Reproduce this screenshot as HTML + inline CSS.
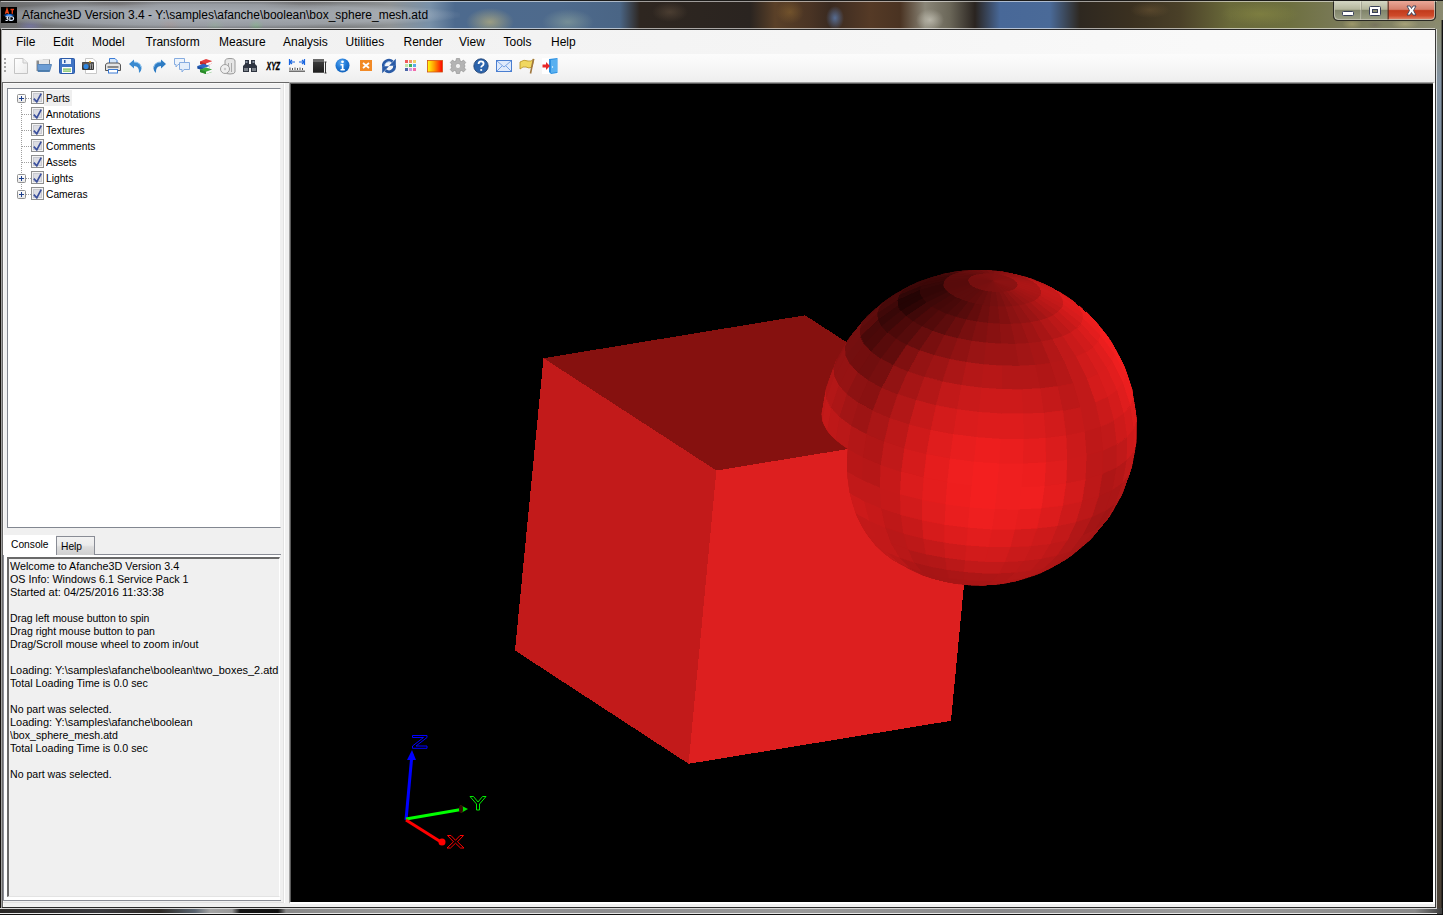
<!DOCTYPE html><html><head><meta charset="utf-8"><style>

*{margin:0;padding:0;box-sizing:border-box}
html,body{width:1443px;height:915px;overflow:hidden;background:#1a1510;font-family:"Liberation Sans", sans-serif;}
.a{position:absolute}
.t{position:absolute;white-space:pre;color:#000;line-height:13px}

</style></head><body>
<div class="a" style="left:0;top:0;width:1443px;height:915px;background:radial-gradient(ellipse 14px 6px at 30px 26px,rgba(120,120,190,.55),rgba(0,0,0,0)),radial-gradient(ellipse 12px 6px at 170px 24px,rgba(150,110,100,.45),rgba(0,0,0,0)),radial-gradient(ellipse 10px 6px at 215px 25px,rgba(110,150,110,.5),rgba(0,0,0,0)),radial-gradient(ellipse 8px 6px at 256px 25px,rgba(90,170,90,.55),rgba(0,0,0,0)),radial-gradient(ellipse 40px 5px at 120px 5px,rgba(70,60,55,.5),rgba(0,0,0,0)),radial-gradient(ellipse 40px 5px at 300px 5px,rgba(70,65,60,.45),rgba(0,0,0,0)),radial-gradient(ellipse 24px 14px at 490px 22px,rgba(205,190,125,.6),rgba(0,0,0,0)),radial-gradient(ellipse 26px 13px at 568px 22px,rgba(150,172,160,.55),rgba(0,0,0,0)),radial-gradient(ellipse 18px 10px at 670px 12px,rgba(110,90,70,.45),rgba(0,0,0,0)),radial-gradient(ellipse 14px 12px at 790px 12px,rgba(150,110,50,.45),rgba(0,0,0,0)),radial-gradient(ellipse 9px 12px at 835px 18px,rgba(95,130,185,.75),rgba(0,0,0,0)),radial-gradient(ellipse 14px 11px at 930px 20px,rgba(210,208,196,.65),rgba(0,0,0,0)),radial-gradient(ellipse 20px 8px at 1150px 10px,rgba(130,100,60,.35),rgba(0,0,0,0)),radial-gradient(ellipse 40px 12px at 1260px 14px,rgba(150,150,70,.4),rgba(0,0,0,0)),radial-gradient(ellipse 10px 5px at 1352px 24px,rgba(185,175,120,.55),rgba(0,0,0,0)),radial-gradient(ellipse 14px 5px at 1405px 24px,rgba(195,185,135,.55),rgba(0,0,0,0)),radial-gradient(ellipse 8px 4px at 1375px 25px,rgba(110,100,90,.5),rgba(0,0,0,0)),linear-gradient(90deg,#6a6a6a 0px,#77797c 60px,#7a7c80 150px,#74767a 250px,#7a7c7e 330px,#8e9294 390px,#7890a8 430px,#4d6a8e 455px,#4e6a8c 560px,#4a6585 620px,#2e2620 640px,#2c2520 700px,#2a2420 750px,#5a4028 775px,#4a3424 810px,#3a2a20 830px,#553a26 870px,#4a3322 900px,#8a8678 925px,#6a6658 950px,#2a2420 975px,#486898 1000px,#4a6a98 1050px,#2e2820 1080px,#3a3020 1130px,#4a4028 1180px,#6a6a3a 1230px,#6e7040 1290px,#7a7a58 1340px,#8a8a70 1443px)"></div>
<div class="a" style="left:0;top:0;width:1443px;height:1px;background:#1c1b19"></div>
<div class="a" style="left:1px;top:1px;width:1436px;height:1px;background:rgba(255,255,255,.55)"></div>
<div class="a" style="left:1px;top:28px;width:1436px;height:1px;background:rgba(255,255,255,.6)"></div>
<div class="a" style="left:0;top:2px;width:460px;height:26px;background:radial-gradient(ellipse 250px 14px at 215px 13px,rgba(200,208,218,.65),rgba(200,208,218,.4) 75%,rgba(200,208,218,0))"></div>
<svg class="a" style="left:1px;top:7px" width="16" height="16">
<defs><radialGradient id="icg" cx="0.5" cy="0.5" r="0.5"><stop offset="0" stop-color="#6ab8ff"/><stop offset="0.4" stop-color="#1a6ad8"/><stop offset="1" stop-color="#000" stop-opacity="0"/></radialGradient></defs>
<rect x="0" y="0" width="16" height="16" fill="#000"/>
<ellipse cx="8" cy="8.3" rx="7" ry="2.2" fill="url(#icg)"/>
<path d="M4.5 6.8 L6 2 L7.5 6.8 M5 5.3 H7" fill="none" stroke="#f04a1e" stroke-width="1.3"/>
<path d="M9.5 2.5 H13 M11.3 2.5 V6.8" fill="none" stroke="#e8401a" stroke-width="1.4"/>
<path d="M4.5 9.8 H7 L6 11.2 Q7.4 11.6 7 12.8 Q6.5 13.8 4.5 13.3" fill="none" stroke="#e8f0ff" stroke-width="1.1"/>
<path d="M8.8 9.8 H10.5 Q12.6 9.8 12.6 11.6 Q12.6 13.4 10.5 13.4 H8.8 Z" fill="none" stroke="#d8e8ff" stroke-width="1.1"/>
</svg>
<div class="t" style="left:22px;top:8px;font-size:12px;line-height:14px;color:#000">Afanche3D Version 3.4 - Y:\samples\afanche\boolean\box_sphere_mesh.atd</div>
<svg class="a" style="left:1330px;top:1px" width="113" height="24">
<defs>
<linearGradient id="bOl" x1="0" y1="0" x2="0" y2="1"><stop offset="0" stop-color="#d4d6c4"/><stop offset=".45" stop-color="#b4b69c"/><stop offset=".5" stop-color="#80846a"/><stop offset="1" stop-color="#9a9e84"/></linearGradient>
<linearGradient id="bRd" x1="0" y1="0" x2="0" y2="1"><stop offset="0" stop-color="#eaa898"/><stop offset=".45" stop-color="#d6806c"/><stop offset=".52" stop-color="#c23a1c"/><stop offset=".8" stop-color="#cf4a2a"/><stop offset="1" stop-color="#e08a70"/></linearGradient>
</defs>
<path d="M3.5 0.5 V15 Q3.5 19.5 8 19.5 H101 Q105.5 19.5 105.5 15 V0.5" fill="#3a3a30" stroke="#2a2a24"/>
<path d="M4.5 0 V15 Q4.5 18.5 8 18.5 H31 V0 Z" fill="url(#bOl)"/>
<path d="M31.5 0 H58 V18.5 H31.5 Z" fill="url(#bOl)"/>
<path d="M58.5 0 H104.5 V15 Q104.5 18.5 101 18.5 H58.5 Z" fill="url(#bRd)"/>
<path d="M4.5 0 V15 Q4.5 18.5 8 18.5 H101 Q104.5 18.5 104.5 15 V0" fill="none" stroke="rgba(255,255,240,.55)" stroke-width="1"/>
<line x1="31" y1="0" x2="31" y2="18.5" stroke="rgba(255,255,240,.6)"/>
<line x1="58" y1="0" x2="58" y2="18.5" stroke="rgba(90,20,10,.7)"/>
<rect x="12.5" y="10.5" width="11" height="4" rx="1" fill="#fff" stroke="#384058"/>
<rect x="39.5" y="5.5" width="11" height="9" rx="1" fill="#fff" stroke="#384058"/>
<rect x="42.5" y="8.5" width="5" height="3" fill="#8a8c70" stroke="#384058"/>
<path d="M77 5 H80 L81.5 7.5 L83 5 H86 L83.5 9.5 L86 14 H83 L81.5 11.5 L80 14 H77 L79.5 9.5 Z" fill="#fff" stroke="#384058" stroke-width="0.9" stroke-linejoin="round"/>
</svg>
<div class="a" style="left:1px;top:29px;width:1434px;height:879px;background:#f0f0f0;border-top:1px solid #2a2a2a"></div>
<div class="a" style="left:2px;top:30px;width:1433px;height:24px;background:linear-gradient(90deg,#efefef 0,#f2f2f2 400px,#f5f5f5 800px,#f9f9f9 1200px,#fafafa 1433px)"></div>
<div class="t" style="left:16px;top:35px;font-size:12px;line-height:14px">File</div>
<div class="t" style="left:53px;top:35px;font-size:12px;line-height:14px">Edit</div>
<div class="t" style="left:92px;top:35px;font-size:12px;line-height:14px">Model</div>
<div class="t" style="left:145.5px;top:35px;font-size:12px;line-height:14px">Transform</div>
<div class="t" style="left:219px;top:35px;font-size:12px;line-height:14px">Measure</div>
<div class="t" style="left:283px;top:35px;font-size:12px;line-height:14px">Analysis</div>
<div class="t" style="left:345.5px;top:35px;font-size:12px;line-height:14px">Utilities</div>
<div class="t" style="left:403.5px;top:35px;font-size:12px;line-height:14px">Render</div>
<div class="t" style="left:459px;top:35px;font-size:12px;line-height:14px">View</div>
<div class="t" style="left:503.5px;top:35px;font-size:12px;line-height:14px">Tools</div>
<div class="t" style="left:551px;top:35px;font-size:12px;line-height:14px">Help</div>
<div class="a" style="left:2px;top:54px;width:1433px;height:28px;background:linear-gradient(#fcfcfc,#f6f6f6 50%,#eeeeee)"></div>
<svg class="a" style="left:0;top:54px" width="600" height="28"><defs>
<linearGradient id="gW" x1="0" y1="0" x2="1" y2="1"><stop offset="0" stop-color="#fff"/><stop offset="1" stop-color="#ececec"/></linearGradient>
<linearGradient id="gBk" x1="0" y1="0" x2="0" y2="1"><stop offset="0" stop-color="#3c3c3c"/><stop offset="1" stop-color="#1e1e1e"/></linearGradient>
<radialGradient id="gInfo" cx="0.4" cy="0.3" r="0.8"><stop offset="0" stop-color="#5aa8f0"/><stop offset="0.5" stop-color="#1f78d6"/><stop offset="1" stop-color="#0e5cb4"/></radialGradient>
<linearGradient id="gYR" x1="0" y1="0" x2="1" y2="0"><stop offset="0" stop-color="#ffff10"/><stop offset="0.45" stop-color="#ff9a00"/><stop offset="1" stop-color="#ff0000"/></linearGradient>
</defs><rect x="4" y="4" width="2" height="2" fill="#a4a4a4" shape-rendering="crispEdges"/><rect x="4" y="8" width="2" height="2" fill="#a4a4a4" shape-rendering="crispEdges"/><rect x="4" y="12" width="2" height="2" fill="#a4a4a4" shape-rendering="crispEdges"/><rect x="4" y="16" width="2" height="2" fill="#a4a4a4" shape-rendering="crispEdges"/><g transform="translate(13,4)"><path d="M1.5 0.5 H10 L14.5 5 V15.5 H1.5 Z" fill="url(#gW)" stroke="#c4c4c4"/><path d="M10 0.5 V5 H14.5" fill="#eee" stroke="#c8c8c8"/></g><g transform="translate(36,4)"><path d="M0.5 2.5 H6 L7 1.5 H14 V13 H0.5 Z" fill="#8a8a8a"/><rect x="3" y="1.5" width="10" height="6" fill="#e8e8e8"/><path d="M1.5 6.5 H15.5 L13.5 13.5 H2 Z" fill="#6c9dd4" stroke="#5a86b8"/><path d="M2 12.8 H13.5" stroke="#3e6e9a"/></g><g transform="translate(59,4)"><rect x="0.5" y="0.5" width="15" height="15" rx="1" fill="#3f74c4" stroke="#2c5aa8"/><rect x="3" y="1" width="9" height="5" fill="#e8f0fb"/><rect x="5" y="2" width="1.5" height="3" fill="#2c5aa8"/><rect x="3" y="9" width="10" height="6" fill="#fff"/><rect x="4" y="10.5" width="8" height="1.2" fill="#6cb84a"/><rect x="4" y="12.5" width="8" height="1.2" fill="#6cb84a"/></g><g transform="translate(82,4)"><path d="M3.5 0.5 H11 L14.5 4 V15.5 H3.5 Z" fill="#fff" stroke="#c8c8c8"/><rect x="0" y="4" width="12" height="8" rx="1" fill="#3a3a3a"/><rect x="0.5" y="4.5" width="11" height="3" fill="#5a5a5a"/><circle cx="4" cy="8.5" r="2.6" fill="#2f86e0"/><rect x="7" y="3" width="2" height="1.5" fill="#e8b030"/><rect x="8" y="6" width="1" height="5" fill="#999"/><rect x="10" y="6" width="1" height="5" fill="#999"/></g><g transform="translate(105,4)"><path d="M4.5 0.5 H10 L12 2.5 V7 H4.5 Z" fill="#d4e6fa" stroke="#3a7bd5"/><path d="M0.5 7 Q1 5 3 5 H13 Q15 5 15.5 7 V12.5 H0.5 Z" fill="#e4e4e4" stroke="#555"/><rect x="2.5" y="8" width="11" height="2" fill="#888"/><rect x="3.5" y="11.5" width="9" height="3.5" fill="#fff" stroke="#3a7bd5"/></g><g transform="translate(128,4)"><path d="M1 6 L6 1.5 V4 Q13.5 4 13.5 10.5 Q13.5 13 11 15 Q11.5 8 6 8 V10.5 Z" fill="#3a8ad0"/><path d="M6 4 Q12 4 13 9" fill="none" stroke="#8cc4f0" stroke-width="1"/></g><g transform="translate(151,4)"><path d="M15 6 L10 1.5 V4 Q2.5 4 2.5 10.5 Q2.5 13 5 15 Q4.5 8 10 8 V10.5 Z" fill="#2e7cc4"/><path d="M10 4 Q4 4 3 9" fill="none" stroke="#80b8e8" stroke-width="1"/></g><g transform="translate(174,4)"><path d="M0.5 0.5 H10.5 V6.5 H4 L2 9 V6.5 H0.5 Z" fill="#eef4fb" stroke="#86ace0"/><path d="M5.5 4.5 H15.5 V11.5 H10 L8 14 V11.5 H5.5 Z" fill="#e4eefa" stroke="#86ace0"/></g><g transform="translate(197,4)"><path d="M3 3.5 L9 1 L15 3 L15 5.5 L9 8 L3 6 Z" fill="#e23c3c"/><path d="M9 5.5 L15 3.3 V5.5 L9 7.7 Z" fill="#fafafa"/><path d="M3 3.5 L9 5.5 V8 L3 6 Z" fill="#c02828"/>
<path d="M0.5 8 L6.5 5.8 L12.5 7.8 V10.3 L6.5 12.5 L0.5 10.5 Z" fill="#2c68c4"/><path d="M6.5 10.2 L12.5 8 V10.2 L6.5 12.4 Z" fill="#fafafa"/><path d="M0.5 8 L6.5 10.2 V12.5 L0.5 10.5 Z" fill="#1c4ea0"/>
<path d="M3 11.5 L9 9.5 L15 11.5 V14 L9 16 L3 14 Z" fill="#3aa83a"/><path d="M9 13.7 L15 11.6 V13.8 L9 15.9 Z" fill="#fafafa"/><path d="M3 11.5 L9 13.7 V16 L3 14 Z" fill="#2a8a2a"/></g><g transform="translate(220,4)"><path d="M5 3 Q5 0.5 10 0.5 Q15 0.5 15 3 V14 Q15 16 10 16 Q5 16 5 14 Z" fill="#e6e6e6" stroke="#9a9a9a"/><rect x="8" y="5" width="1" height="9" fill="#aaa"/><rect x="11" y="5" width="1" height="9" fill="#aaa"/><circle cx="5" cy="11" r="4.5" fill="#efefef" stroke="#a0a0a0"/><circle cx="5" cy="11" r="1.2" fill="#c8c8c8"/></g><g transform="translate(243,4)"><path d="M2 2 H6 V6 H8 V2 H12 V6 L14 8 V14 H8 V10 H6 V14 H0 V8 L2 6 Z" fill="#2e3440"/><rect x="1" y="10" width="4" height="3" fill="#7a8088"/><rect x="9" y="10" width="4" height="3" fill="#7a8088"/><rect x="2.5" y="3" width="2" height="2" fill="#8892a0"/><rect x="9.5" y="3" width="2" height="2" fill="#8892a0"/></g><g transform="translate(266,4)"><text x="0.6" y="12.3" font-family="Liberation Sans" font-weight="bold" font-style="italic" font-size="10" fill="#000" stroke="#000" stroke-width="0.35" textLength="13.5" lengthAdjust="spacingAndGlyphs" style="-webkit-font-smoothing:antialiased">XYZ</text></g><g transform="translate(289,4)"><path d="M0.5 1 V7 M0.5 4 H6 M3 2 L0.8 4 L3 6 M15.5 1 V7 M15.5 4 H10 M13 2 L15.2 4 L13 6" fill="none" stroke="#1a66e0" stroke-width="1.2"/><rect x="0" y="12.5" width="16" height="1.5" fill="#707070"/><path d="M1 9.5 V12 M3.5 10 V12 M6 9.5 V12 M8.5 10 V12 M11 9.5 V12 M13.5 10 V12" stroke="#555" stroke-width="1"/></g><g transform="translate(312,4)"><rect x="1" y="1" width="11" height="13.5" fill="#2c2c2c"/><rect x="1" y="1" width="11" height="3" fill="#6a6a6a"/><rect x="1" y="4" width="11" height="10.5" fill="url(#gBk)"/><path d="M13.5 4 V15 M12.5 4 H14.5 M12.5 15 H14.5" stroke="#333" stroke-width="1"/></g><g transform="translate(335,4)"><circle cx="7.5" cy="7.5" r="7" fill="url(#gInfo)"/><circle cx="7.5" cy="3.8" r="1.4" fill="#fff"/><path d="M5.5 6 H8.5 V11 H9.8 V12.5 H5.5 V11 H6.8 V7.5 H5.5 Z" fill="#fff"/></g><g transform="translate(358,4)"><rect x="2" y="2" width="12" height="11" fill="#f28a26"/><path d="M5 5 L11 10 M11 5 L5 10" stroke="#fff" stroke-width="1.8"/></g><g transform="translate(381,4)"><path d="M2.4 8.6 A5.6 5.6 0 0 1 11.6 3.6" fill="none" stroke="#2a5ba6" stroke-width="2.8"/><path d="M14.8 0.8 V7.8 H8 Z" fill="#2a5ba6"/><path d="M13.6 7.4 A5.6 5.6 0 0 1 4.4 12.4" fill="none" stroke="#2a5ba6" stroke-width="2.8"/><path d="M1.2 15.2 V8.2 H8 Z" fill="#2a5ba6"/><path d="M3.6 7.6 A4.4 4.4 0 0 1 9.5 4" fill="none" stroke="#9cc0ea" stroke-width="0.9"/></g><g transform="translate(404,4)"><rect x="1" y="2" width="3" height="3" fill="#f05a5a"/><rect x="5" y="2" width="3" height="3" fill="#f4946a"/><rect x="9" y="2" width="3" height="3" fill="#f0d068"/><rect x="1" y="6" width="3" height="3" fill="#c4e4a8"/><rect x="5" y="6" width="3" height="3" fill="#3cb454"/><rect x="9" y="6" width="3" height="3" fill="#5aaae6"/><rect x="1" y="10" width="3" height="3" fill="#4a66a8"/><rect x="5" y="10" width="3" height="3" fill="#d498e4"/><rect x="9" y="10" width="3" height="3" fill="#f46aa8"/></g><g transform="translate(427,4)"><rect x="0.5" y="2.5" width="15" height="11.5" fill="url(#gYR)" stroke="#d05010" stroke-width="0.8"/></g><g transform="translate(450,4)"><g transform="translate(8,8)"><path d="M-1.6 -7.5 H1.6 L2 -5.2 L3.6 -4.5 L5.5 -5.9 L7.7 -3.6 L6.3 -1.7 L7 0 L6.3 1.7 L7.7 3.6 L5.5 5.9 L3.6 4.5 L2 5.2 L1.6 7.5 H-1.6 L-2 5.2 L-3.6 4.5 L-5.5 5.9 L-7.7 3.6 L-6.3 1.7 L-7 0 L-6.3 -1.7 L-7.7 -3.6 L-5.5 -5.9 L-3.6 -4.5 L-2 -5.2 Z" fill="#b4b4b4" stroke="#8c8c8c" stroke-width="0.6"/><circle r="2.6" fill="#f2f2f2" stroke="#999" stroke-width="0.6"/></g></g><g transform="translate(473,4)"><circle cx="8" cy="8" r="7.2" fill="#2c64ac" stroke="#1c3c6c" stroke-width="0.8"/><path d="M5.6 6 Q5.6 3.4 8 3.4 Q10.6 3.4 10.6 5.8 Q10.6 7.2 9 8 Q8.2 8.4 8.2 9.6" fill="none" stroke="#fff" stroke-width="1.8"/><circle cx="8.2" cy="12" r="1.1" fill="#fff"/></g><g transform="translate(496,4)"><rect x="0.5" y="2.5" width="15" height="11" fill="#dfeafb" stroke="#4a7ed0"/><path d="M1 3 L8 9 L15 3 M1 13 L6 8 M15 13 L10 8" fill="none" stroke="#6a9ae0" stroke-width="0.9"/></g><g transform="translate(519,4)"><path d="M1 4 Q5 1 9 3 Q12 4 15 1 L13 9 Q10 11 7 9 Q4 8 1 11 Z" fill="#f0d860" stroke="#b89020" stroke-width="0.8"/><path d="M14.5 1 Q13 8 11.5 15.5" fill="none" stroke="#a07840" stroke-width="1.6"/></g><g transform="translate(542,4)"><rect x="0" y="0" width="16" height="16" fill="#fff"/><path d="M7 1 L15.5 0 V15 L9 16 L7 14 Z" fill="#2a8fe0"/><path d="M9 2 L15 1 V14 L9 15 Z" fill="#58b0f0"/><path d="M0.5 6.5 H4 V4 L8 8 L4 12 V9.5 H0.5 Z" fill="#e82828"/><circle cx="10.5" cy="9" r="0.7" fill="#fff"/></g></svg>
<div class="a" style="left:2px;top:82px;width:287px;height:826px;background:#f0f0f0;border-left:1px solid #696969;border-top:1px solid #696969"></div>
<div class="a" style="left:3px;top:83px;width:1px;height:824px;background:#fafafa"></div>
<div class="a" style="left:3px;top:83px;width:280px;height:1px;background:#fafafa"></div>
<div class="a" style="left:284px;top:83px;width:1px;height:820px;background:#fff"></div>
<div class="a" style="left:7px;top:88px;width:274px;height:440px;background:#fff;border:1px solid #828790;border-right-color:#f0f0f0"></div>
<svg class="a" style="left:0;top:0" width="290" height="210"><rect x="21" y="104" width="1" height="1" fill="#a0a0a0"/><rect x="21" y="106" width="1" height="1" fill="#a0a0a0"/><rect x="21" y="108" width="1" height="1" fill="#a0a0a0"/><rect x="21" y="110" width="1" height="1" fill="#a0a0a0"/><rect x="21" y="112" width="1" height="1" fill="#a0a0a0"/><rect x="21" y="114" width="1" height="1" fill="#a0a0a0"/><rect x="21" y="116" width="1" height="1" fill="#a0a0a0"/><rect x="21" y="118" width="1" height="1" fill="#a0a0a0"/><rect x="21" y="120" width="1" height="1" fill="#a0a0a0"/><rect x="21" y="122" width="1" height="1" fill="#a0a0a0"/><rect x="21" y="124" width="1" height="1" fill="#a0a0a0"/><rect x="21" y="126" width="1" height="1" fill="#a0a0a0"/><rect x="21" y="128" width="1" height="1" fill="#a0a0a0"/><rect x="21" y="130" width="1" height="1" fill="#a0a0a0"/><rect x="21" y="132" width="1" height="1" fill="#a0a0a0"/><rect x="21" y="134" width="1" height="1" fill="#a0a0a0"/><rect x="21" y="136" width="1" height="1" fill="#a0a0a0"/><rect x="21" y="138" width="1" height="1" fill="#a0a0a0"/><rect x="21" y="140" width="1" height="1" fill="#a0a0a0"/><rect x="21" y="142" width="1" height="1" fill="#a0a0a0"/><rect x="21" y="144" width="1" height="1" fill="#a0a0a0"/><rect x="21" y="146" width="1" height="1" fill="#a0a0a0"/><rect x="21" y="148" width="1" height="1" fill="#a0a0a0"/><rect x="21" y="150" width="1" height="1" fill="#a0a0a0"/><rect x="21" y="152" width="1" height="1" fill="#a0a0a0"/><rect x="21" y="154" width="1" height="1" fill="#a0a0a0"/><rect x="21" y="156" width="1" height="1" fill="#a0a0a0"/><rect x="21" y="158" width="1" height="1" fill="#a0a0a0"/><rect x="21" y="160" width="1" height="1" fill="#a0a0a0"/><rect x="21" y="162" width="1" height="1" fill="#a0a0a0"/><rect x="21" y="164" width="1" height="1" fill="#a0a0a0"/><rect x="21" y="166" width="1" height="1" fill="#a0a0a0"/><rect x="21" y="168" width="1" height="1" fill="#a0a0a0"/><rect x="21" y="170" width="1" height="1" fill="#a0a0a0"/><rect x="21" y="172" width="1" height="1" fill="#a0a0a0"/><rect x="21" y="184" width="1" height="1" fill="#a0a0a0"/><rect x="21" y="186" width="1" height="1" fill="#a0a0a0"/><rect x="21" y="188" width="1" height="1" fill="#a0a0a0"/><rect x="26" y="98" width="1" height="1" fill="#a0a0a0"/><rect x="28" y="98" width="1" height="1" fill="#a0a0a0"/><rect x="30" y="98" width="1" height="1" fill="#a0a0a0"/><rect x="17.5" y="94.5" width="8" height="8" rx="1" fill="url(#pg)" stroke="#919191"/><rect x="19" y="98" width="5" height="1" fill="#1e3f8c"/><rect x="21" y="96" width="1" height="5" fill="#1e3f8c"/><rect x="31.5" y="91.5" width="12" height="12" fill="#f4f4f4" stroke="#8e8f8f"/><rect x="33.5" y="93.5" width="8" height="8" fill="#dcdde3" stroke="#c8c9d0"/><path d="M33.8 98.6 L36.8 101.8 L41.2 93.6" fill="none" stroke="#3a4f9c" stroke-width="1.7"/><rect x="22" y="114" width="1" height="1" fill="#a0a0a0"/><rect x="24" y="114" width="1" height="1" fill="#a0a0a0"/><rect x="26" y="114" width="1" height="1" fill="#a0a0a0"/><rect x="28" y="114" width="1" height="1" fill="#a0a0a0"/><rect x="30" y="114" width="1" height="1" fill="#a0a0a0"/><rect x="31.5" y="107.5" width="12" height="12" fill="#f4f4f4" stroke="#8e8f8f"/><rect x="33.5" y="109.5" width="8" height="8" fill="#dcdde3" stroke="#c8c9d0"/><path d="M33.8 114.6 L36.8 117.8 L41.2 109.6" fill="none" stroke="#3a4f9c" stroke-width="1.7"/><rect x="22" y="130" width="1" height="1" fill="#a0a0a0"/><rect x="24" y="130" width="1" height="1" fill="#a0a0a0"/><rect x="26" y="130" width="1" height="1" fill="#a0a0a0"/><rect x="28" y="130" width="1" height="1" fill="#a0a0a0"/><rect x="30" y="130" width="1" height="1" fill="#a0a0a0"/><rect x="31.5" y="123.5" width="12" height="12" fill="#f4f4f4" stroke="#8e8f8f"/><rect x="33.5" y="125.5" width="8" height="8" fill="#dcdde3" stroke="#c8c9d0"/><path d="M33.8 130.6 L36.8 133.8 L41.2 125.6" fill="none" stroke="#3a4f9c" stroke-width="1.7"/><rect x="22" y="146" width="1" height="1" fill="#a0a0a0"/><rect x="24" y="146" width="1" height="1" fill="#a0a0a0"/><rect x="26" y="146" width="1" height="1" fill="#a0a0a0"/><rect x="28" y="146" width="1" height="1" fill="#a0a0a0"/><rect x="30" y="146" width="1" height="1" fill="#a0a0a0"/><rect x="31.5" y="139.5" width="12" height="12" fill="#f4f4f4" stroke="#8e8f8f"/><rect x="33.5" y="141.5" width="8" height="8" fill="#dcdde3" stroke="#c8c9d0"/><path d="M33.8 146.6 L36.8 149.8 L41.2 141.6" fill="none" stroke="#3a4f9c" stroke-width="1.7"/><rect x="22" y="162" width="1" height="1" fill="#a0a0a0"/><rect x="24" y="162" width="1" height="1" fill="#a0a0a0"/><rect x="26" y="162" width="1" height="1" fill="#a0a0a0"/><rect x="28" y="162" width="1" height="1" fill="#a0a0a0"/><rect x="30" y="162" width="1" height="1" fill="#a0a0a0"/><rect x="31.5" y="155.5" width="12" height="12" fill="#f4f4f4" stroke="#8e8f8f"/><rect x="33.5" y="157.5" width="8" height="8" fill="#dcdde3" stroke="#c8c9d0"/><path d="M33.8 162.6 L36.8 165.8 L41.2 157.6" fill="none" stroke="#3a4f9c" stroke-width="1.7"/><rect x="26" y="178" width="1" height="1" fill="#a0a0a0"/><rect x="28" y="178" width="1" height="1" fill="#a0a0a0"/><rect x="30" y="178" width="1" height="1" fill="#a0a0a0"/><rect x="17.5" y="174.5" width="8" height="8" rx="1" fill="url(#pg)" stroke="#919191"/><rect x="19" y="178" width="5" height="1" fill="#1e3f8c"/><rect x="21" y="176" width="1" height="5" fill="#1e3f8c"/><rect x="31.5" y="171.5" width="12" height="12" fill="#f4f4f4" stroke="#8e8f8f"/><rect x="33.5" y="173.5" width="8" height="8" fill="#dcdde3" stroke="#c8c9d0"/><path d="M33.8 178.6 L36.8 181.8 L41.2 173.6" fill="none" stroke="#3a4f9c" stroke-width="1.7"/><rect x="26" y="194" width="1" height="1" fill="#a0a0a0"/><rect x="28" y="194" width="1" height="1" fill="#a0a0a0"/><rect x="30" y="194" width="1" height="1" fill="#a0a0a0"/><rect x="17.5" y="190.5" width="8" height="8" rx="1" fill="url(#pg)" stroke="#919191"/><rect x="19" y="194" width="5" height="1" fill="#1e3f8c"/><rect x="21" y="192" width="1" height="5" fill="#1e3f8c"/><rect x="31.5" y="187.5" width="12" height="12" fill="#f4f4f4" stroke="#8e8f8f"/><rect x="33.5" y="189.5" width="8" height="8" fill="#dcdde3" stroke="#c8c9d0"/><path d="M33.8 194.6 L36.8 197.8 L41.2 189.6" fill="none" stroke="#3a4f9c" stroke-width="1.7"/><defs><linearGradient id="pg" x1="0" y1="0" x2="0" y2="1"><stop offset="0" stop-color="#fff"/><stop offset="1" stop-color="#e6e6e6"/></linearGradient></defs></svg>
<div class="a" style="left:44px;top:90px;width:28px;height:16px;background:#efefef"></div>
<div class="t" style="left:46px;top:92px;font-size:11px;line-height:13px;transform:scaleX(0.93);transform-origin:0 0">Parts</div>
<div class="t" style="left:46px;top:108px;font-size:11px;line-height:13px;transform:scaleX(0.93);transform-origin:0 0">Annotations</div>
<div class="t" style="left:46px;top:124px;font-size:11px;line-height:13px;transform:scaleX(0.93);transform-origin:0 0">Textures</div>
<div class="t" style="left:46px;top:140px;font-size:11px;line-height:13px;transform:scaleX(0.93);transform-origin:0 0">Comments</div>
<div class="t" style="left:46px;top:156px;font-size:11px;line-height:13px;transform:scaleX(0.93);transform-origin:0 0">Assets</div>
<div class="t" style="left:46px;top:172px;font-size:11px;line-height:13px;transform:scaleX(0.93);transform-origin:0 0">Lights</div>
<div class="t" style="left:46px;top:188px;font-size:11px;line-height:13px;transform:scaleX(0.93);transform-origin:0 0">Cameras</div>
<div class="a" style="left:3px;top:554px;width:278px;height:1px;background:#898c95"></div>
<div class="a" style="left:3px;top:535px;width:53px;height:20px;background:#fff"></div>
<div class="a" style="left:56px;top:536px;width:39px;height:19px;border:1px solid #898c95;border-bottom:none;background:linear-gradient(#f2f2f2 0,#ebebeb 45%,#dddddd 55%,#cfcfcf 100%)"></div>
<div class="t" style="left:11px;top:538px;font-size:11px;line-height:13px;transform:scaleX(0.93);transform-origin:0 0">Console</div>
<div class="t" style="left:61px;top:540px;font-size:11px;line-height:13px;transform:scaleX(0.93);transform-origin:0 0">Help</div>
<div class="a" style="left:3px;top:555px;width:277px;height:346px;background:#fff;border-left:1px solid #898c95"></div>
<div class="a" style="left:283px;top:84px;width:1px;height:819px;background:#e3e3e3"></div>
<div class="a" style="left:7px;top:557px;width:273px;height:340px;background:#f0f0f0;border-top:2px solid #696969;border-left:2px solid #696969;border-right:1px solid #fff;border-bottom:1px solid #e3e3e3"></div>
<div class="a" style="left:3px;top:900px;width:278px;height:1px;background:#898c95"></div>
<div class="a" style="left:3px;top:902px;width:280px;height:1px;background:#e3e3e3"></div>
<div class="t" style="left:10px;top:559.5px;font-size:11px;line-height:13px;transform:scaleX(0.979);transform-origin:0 0">Welcome to Afanche3D Version 3.4</div>
<div class="t" style="left:10px;top:572.5px;font-size:11px;line-height:13px;transform:scaleX(0.977);transform-origin:0 0">OS Info: Windows 6.1 Service Pack 1</div>
<div class="t" style="left:10px;top:585.5px;font-size:11px;line-height:13px;transform:scaleX(1.0);transform-origin:0 0">Started at: 04/25/2016 11:33:38</div>
<div class="t" style="left:10px;top:611.5px;font-size:11px;line-height:13px;transform:scaleX(0.95);transform-origin:0 0">Drag left mouse button to spin</div>
<div class="t" style="left:10px;top:624.5px;font-size:11px;line-height:13px;transform:scaleX(0.955);transform-origin:0 0">Drag right mouse button to pan</div>
<div class="t" style="left:10px;top:637.5px;font-size:11px;line-height:13px;transform:scaleX(0.969);transform-origin:0 0">Drag/Scroll mouse wheel to zoom in/out</div>
<div class="t" style="left:10px;top:663.5px;font-size:11px;line-height:13px;transform:scaleX(0.996);transform-origin:0 0">Loading: Y:\samples\afanche\boolean\two_boxes_2.atd</div>
<div class="t" style="left:10px;top:676.5px;font-size:11px;line-height:13px;transform:scaleX(0.972);transform-origin:0 0">Total Loading Time is 0.0 sec</div>
<div class="t" style="left:10px;top:702.5px;font-size:11px;line-height:13px;transform:scaleX(0.961);transform-origin:0 0">No part was selected.</div>
<div class="t" style="left:10px;top:715.5px;font-size:11px;line-height:13px;transform:scaleX(0.996);transform-origin:0 0">Loading: Y:\samples\afanche\boolean</div>
<div class="t" style="left:10px;top:728.5px;font-size:11px;line-height:13px;transform:scaleX(0.964);transform-origin:0 0">\box_sphere_mesh.atd</div>
<div class="t" style="left:10px;top:741.5px;font-size:11px;line-height:13px;transform:scaleX(0.972);transform-origin:0 0">Total Loading Time is 0.0 sec</div>
<div class="t" style="left:10px;top:767.5px;font-size:11px;line-height:13px;transform:scaleX(0.961);transform-origin:0 0">No part was selected.</div>
<div class="a" style="left:289px;top:82px;width:1147px;height:826px;background:#f0f0f0"></div>
<div class="a" style="left:289px;top:82px;width:1146px;height:822px;background:#000;border-top:1px solid #a0a0a0;border-left:1px solid #a0a0a0;border-right:2px solid #fff;border-bottom:2px solid #fff;box-shadow:inset 1px 1px 0 #5a5a5a"></div>
<svg class="a" style="left:0;top:0" width="1443" height="915" shape-rendering="crispEdges"><polygon points="979.00,427.60 805.00,315.30 543.50,358.20 716.40,470.50" fill="#86110f"/><polygon points="543.50,358.20 716.40,470.50 688.60,763.80 515.00,650.50" fill="#c21a1a"/><polygon points="979.00,427.60 716.40,470.50 688.60,763.80 951.00,720.80" fill="#dd1f1f"/><defs><clipPath id="sc"><polygon points="983.62,585.75 968.88,585.50 955.12,584.00 938.38,580.50 924.88,576.25 911.12,570.50 902.38,566.00 894.38,561.25 883.88,553.50 875.25,545.12 868.00,536.12 861.75,526.12 857.00,516.38 852.25,503.12 849.25,490.38 847.50,477.62 847.00,469.62 847.00,458.62 847.75,448.88 841.62,444.75 836.62,440.75 831.50,435.88 828.50,432.38 826.50,429.62 823.75,424.62 822.00,419.38 821.50,415.12 823.00,401.88 826.25,386.88 830.25,374.12 835.25,361.88 842.25,348.38 851.75,333.88 862.25,321.12 872.62,310.75 883.12,302.00 894.62,294.00 906.88,287.00 917.62,282.00 930.38,277.25 945.12,273.25 957.88,271.00 971.62,269.75 986.38,269.75 1001.88,271.25 1016.12,274.00 1030.62,278.25 1044.38,283.75 1051.12,287.00 1060.12,292.00 1072.88,300.50 1085.38,310.75 1095.75,321.12 1106.25,333.88 1115.75,348.38 1122.75,361.88 1127.75,374.12 1130.25,381.62 1133.00,391.88 1135.50,405.12 1137.00,421.62 1136.75,438.38 1135.25,451.88 1132.25,466.62 1127.25,482.62 1122.25,494.62 1113.75,510.38 1108.50,518.38 1103.50,525.12 1094.75,535.38 1084.12,545.75 1071.38,556.00 1059.12,564.00 1043.62,572.00 1033.12,576.25 1022.38,579.75 1014.62,581.75 999.38,584.50 983.62,585.75"/></clipPath></defs><g clip-path="url(#sc)" shape-rendering="crispEdges"><polygon points="1066.0,559.4 1073.4,554.2 1054.4,565.2 1048.2,569.6" fill="rgb(174,22,22)" stroke="rgb(174,22,22)" stroke-width="0.6"/><polygon points="917.9,282.1 909.8,285.8 892.0,296.0 901.8,291.5" fill="rgb(74,9,9)" stroke="rgb(74,9,9)" stroke-width="0.6"/><polygon points="892.0,296.0 884.6,301.2 867.9,315.4 876.4,309.4" fill="rgb(87,11,11)" stroke="rgb(87,11,11)" stroke-width="0.6"/><polygon points="922.1,575.1 931.4,578.2 941.8,580.6 935.5,578.5" fill="rgb(165,21,21)" stroke="rgb(165,21,21)" stroke-width="0.6"/><polygon points="1136.5,420.1 1135.6,411.0 1135.4,434.0 1136.2,443.2" fill="rgb(208,27,27)" stroke="rgb(208,27,27)" stroke-width="0.6"/><polygon points="1074.5,302.1 1067.4,296.8 1081.7,309.2 1090.1,315.5" fill="rgb(233,30,30)" stroke="rgb(233,30,30)" stroke-width="0.6"/><polygon points="996.2,584.5 1006.0,583.3 992.6,584.1 985.9,584.9" fill="rgb(171,22,22)" stroke="rgb(171,22,22)" stroke-width="0.6"/><polygon points="1096.1,322.0 1090.1,315.5 1103.1,331.7 1109.9,339.2" fill="rgb(247,32,32)" stroke="rgb(247,32,32)" stroke-width="0.6"/><polygon points="821.5,435.3 822.4,444.4 826.0,466.9 825.2,458.2" fill="rgb(211,27,27)" stroke="rgb(211,27,27)" stroke-width="0.6"/><polygon points="994.4,270.7 986.7,270.2 983.3,270.4 994.5,271.2" fill="rgb(125,16,16)" stroke="rgb(125,16,16)" stroke-width="0.6"/><polygon points="1001.9,271.7 994.4,270.7 994.5,271.2 1005.7,272.6" fill="rgb(136,17,17)" stroke="rgb(136,17,17)" stroke-width="0.6"/><polygon points="833.3,488.5 837.5,496.8 848.1,516.2 844.3,508.7" fill="rgb(199,25,25)" stroke="rgb(199,25,25)" stroke-width="0.6"/><polygon points="931.4,578.2 941.6,580.7 948.7,582.3 941.8,580.6" fill="rgb(165,21,21)" stroke="rgb(165,21,21)" stroke-width="0.6"/><polygon points="986.7,270.2 979.3,270.1 972.3,270.3 983.3,270.4" fill="rgb(114,14,14)" stroke="rgb(114,14,14)" stroke-width="0.6"/><polygon points="985.7,585.1 996.2,584.5 985.9,584.9 978.7,585.3" fill="rgb(170,22,22)" stroke="rgb(170,22,22)" stroke-width="0.6"/><polygon points="1009.3,273.1 1001.9,271.7 1005.7,272.6 1016.4,274.7" fill="rgb(148,19,19)" stroke="rgb(148,19,19)" stroke-width="0.6"/><polygon points="943.1,273.9 935.5,276.3 917.9,282.1 927.8,279.0" fill="rgb(70,9,9)" stroke="rgb(70,9,9)" stroke-width="0.6"/><polygon points="1129.1,474.6 1132.1,465.9 1124.2,487.7 1121.4,496.0" fill="rgb(181,23,23)" stroke="rgb(181,23,23)" stroke-width="0.6"/><polygon points="867.9,315.4 862.4,322.0 847.9,339.6 854.0,332.3" fill="rgb(113,14,14)" stroke="rgb(113,14,14)" stroke-width="0.6"/><polygon points="1051.0,287.6 1044.1,283.8 1058.5,291.9 1067.4,296.8" fill="rgb(208,27,27)" stroke="rgb(208,27,27)" stroke-width="0.6"/><polygon points="890.6,558.6 899.5,563.5 913.9,571.6 907.0,567.8" fill="rgb(184,23,23)" stroke="rgb(184,23,23)" stroke-width="0.6"/><polygon points="1104.0,523.1 1110.1,515.8 1095.6,533.4 1090.1,540.0" fill="rgb(173,22,22)" stroke="rgb(173,22,22)" stroke-width="0.6"/><polygon points="836.6,359.4 833.8,367.7 825.9,389.5 828.9,380.8" fill="rgb(168,21,21)" stroke="rgb(168,21,21)" stroke-width="0.6"/><polygon points="1030.2,576.4 1040.1,573.3 1022.5,579.1 1014.9,581.5" fill="rgb(175,22,22)" stroke="rgb(175,22,22)" stroke-width="0.6"/><polygon points="941.6,580.7 952.3,582.8 956.1,583.7 948.7,582.3" fill="rgb(166,21,21)" stroke="rgb(166,21,21)" stroke-width="0.6"/><polygon points="979.3,270.1 972.1,270.5 961.8,270.9 972.3,270.3" fill="rgb(104,13,13)" stroke="rgb(104,13,13)" stroke-width="0.6"/><polygon points="974.7,585.0 985.7,585.1 978.7,585.3 971.3,585.2" fill="rgb(169,22,22)" stroke="rgb(169,22,22)" stroke-width="0.6"/><polygon points="1016.2,274.8 1009.3,273.1 1016.4,274.7 1026.6,277.2" fill="rgb(159,20,20)" stroke="rgb(159,20,20)" stroke-width="0.6"/><polygon points="1113.7,346.7 1109.9,339.2 1120.5,358.6 1124.7,366.9" fill="rgb(246,32,32)" stroke="rgb(246,32,32)" stroke-width="0.6"/><polygon points="952.3,582.8 963.5,584.2 963.6,584.7 956.1,583.7" fill="rgb(167,21,21)" stroke="rgb(167,21,21)" stroke-width="0.6"/><polygon points="963.5,584.2 974.7,585.0 971.3,585.2 963.6,584.7" fill="rgb(168,21,21)" stroke="rgb(168,21,21)" stroke-width="0.6"/><polygon points="1132.8,397.2 1132.0,388.5 1135.6,411.0 1136.5,420.1" fill="rgb(222,28,28)" stroke="rgb(222,28,28)" stroke-width="0.6"/><polygon points="848.1,516.2 854.9,523.7 867.9,539.9 861.9,533.4" fill="rgb(185,24,24)" stroke="rgb(185,24,24)" stroke-width="0.6"/><polygon points="972.1,270.5 965.4,271.3 952.0,272.1 961.8,270.9" fill="rgb(93,12,12)" stroke="rgb(93,12,12)" stroke-width="0.6"/><polygon points="867.9,539.9 876.3,546.2 890.6,558.6 883.5,553.3" fill="rgb(193,25,25)" stroke="rgb(193,25,25)" stroke-width="0.6"/><polygon points="821.8,412.2 822.6,421.4 822.4,444.4 821.5,435.3" fill="rgb(204,26,26)" stroke="rgb(204,26,26)" stroke-width="0.6"/><polygon points="1022.5,276.9 1016.2,274.8 1026.6,277.2 1035.9,280.3" fill="rgb(169,22,22)" stroke="rgb(169,22,22)" stroke-width="0.6"/><polygon points="1081.6,546.0 1090.1,540.0 1073.4,554.2 1066.0,559.4" fill="rgb(172,22,22)" stroke="rgb(172,22,22)" stroke-width="0.6"/><polygon points="1056.2,563.9 1066.0,559.4 1048.2,569.6 1040.1,573.3" fill="rgb(174,22,22)" stroke="rgb(174,22,22)" stroke-width="0.6"/><polygon points="909.8,285.8 903.6,290.2 884.6,301.2 892.0,296.0" fill="rgb(73,9,9)" stroke="rgb(73,9,9)" stroke-width="0.6"/><polygon points="1079.4,307.5 1074.5,302.1 1090.1,315.5 1096.1,322.0" fill="rgb(237,30,30)" stroke="rgb(237,30,30)" stroke-width="0.6"/><polygon points="1133.2,451.9 1136.2,443.2 1132.1,465.9 1129.1,474.6" fill="rgb(193,25,25)" stroke="rgb(193,25,25)" stroke-width="0.6"/><polygon points="826.0,466.9 830.5,475.8 837.5,496.8 833.3,488.5" fill="rgb(204,26,26)" stroke="rgb(204,26,26)" stroke-width="0.6"/><polygon points="935.5,276.3 929.2,279.2 909.8,285.8 917.9,282.1" fill="rgb(64,8,8)" stroke="rgb(64,8,8)" stroke-width="0.6"/><polygon points="899.5,563.5 910.1,568.1 922.1,575.1 913.9,571.6" fill="rgb(177,23,23)" stroke="rgb(177,23,23)" stroke-width="0.6"/><polygon points="1018.8,578.8 1030.2,576.4 1014.9,581.5 1006.0,583.3" fill="rgb(175,22,22)" stroke="rgb(175,22,22)" stroke-width="0.6"/><polygon points="1056.4,291.7 1051.0,287.6 1067.4,296.8 1074.5,302.1" fill="rgb(216,28,28)" stroke="rgb(216,28,28)" stroke-width="0.6"/><polygon points="847.9,339.6 845.2,347.4 833.8,367.7 836.6,359.4" fill="rgb(142,18,18)" stroke="rgb(142,18,18)" stroke-width="0.6"/><polygon points="965.4,271.3 959.4,272.5 943.1,273.9 952.0,272.1" fill="rgb(80,10,10)" stroke="rgb(80,10,10)" stroke-width="0.6"/><polygon points="884.6,301.2 879.8,307.0 862.4,322.0 867.9,315.4" fill="rgb(90,11,11)" stroke="rgb(90,11,11)" stroke-width="0.6"/><polygon points="1114.9,503.8 1121.4,496.0 1110.1,515.8 1104.0,523.1" fill="rgb(172,22,22)" stroke="rgb(172,22,22)" stroke-width="0.6"/><polygon points="1028.1,279.3 1022.5,276.9 1035.9,280.3 1044.1,283.8" fill="rgb(179,23,23)" stroke="rgb(179,23,23)" stroke-width="0.6"/><polygon points="1099.4,328.6 1096.1,322.0 1109.9,339.2 1113.7,346.7" fill="rgb(246,32,32)" stroke="rgb(246,32,32)" stroke-width="0.6"/><polygon points="1125.4,375.0 1124.7,366.9 1132.0,388.5 1132.8,397.2" fill="rgb(236,30,30)" stroke="rgb(236,30,30)" stroke-width="0.6"/><polygon points="825.9,389.5 826.7,398.5 822.6,421.4 821.8,412.2" fill="rgb(192,24,24)" stroke="rgb(192,24,24)" stroke-width="0.6"/><polygon points="910.1,568.1 922.2,572.0 931.4,578.2 922.1,575.1" fill="rgb(169,21,21)" stroke="rgb(169,21,21)" stroke-width="0.6"/><polygon points="959.4,272.5 954.2,274.2 935.5,276.3 943.1,273.9" fill="rgb(70,9,9)" stroke="rgb(70,9,9)" stroke-width="0.6"/><polygon points="1006.1,580.3 1018.8,578.8 1006.0,583.3 996.2,584.5" fill="rgb(174,22,22)" stroke="rgb(174,22,22)" stroke-width="0.6"/><polygon points="837.5,496.8 845.1,505.1 854.9,523.7 848.1,516.2" fill="rgb(192,25,25)" stroke="rgb(192,25,25)" stroke-width="0.6"/><polygon points="1032.8,281.9 1028.1,279.3 1044.1,283.8 1051.0,287.6" fill="rgb(187,24,24)" stroke="rgb(187,24,24)" stroke-width="0.6"/><polygon points="1133.5,428.7 1136.5,420.1 1136.2,443.2 1133.2,451.9" fill="rgb(210,27,27)" stroke="rgb(210,27,27)" stroke-width="0.6"/><polygon points="876.3,546.2 887.1,552.1 899.5,563.5 890.6,558.6" fill="rgb(193,25,25)" stroke="rgb(193,25,25)" stroke-width="0.6"/><polygon points="822.4,444.4 827.0,453.5 830.5,475.8 826.0,466.9" fill="rgb(204,26,26)" stroke="rgb(204,26,26)" stroke-width="0.6"/><polygon points="1044.3,567.6 1056.2,563.9 1040.1,573.3 1030.2,576.4" fill="rgb(175,22,22)" stroke="rgb(175,22,22)" stroke-width="0.6"/><polygon points="1094.7,529.6 1104.0,523.1 1090.1,540.0 1081.6,546.0" fill="rgb(167,21,21)" stroke="rgb(167,21,21)" stroke-width="0.6"/><polygon points="929.2,279.2 924.5,282.5 903.6,290.2 909.8,285.8" fill="rgb(62,8,8)" stroke="rgb(62,8,8)" stroke-width="0.6"/><polygon points="862.4,322.0 860.0,329.1 845.2,347.4 847.9,339.6" fill="rgb(116,15,15)" stroke="rgb(116,15,15)" stroke-width="0.6"/><polygon points="854.9,523.7 864.6,530.9 876.3,546.2 867.9,539.9" fill="rgb(186,24,24)" stroke="rgb(186,24,24)" stroke-width="0.6"/><polygon points="1060.3,295.9 1056.4,291.7 1074.5,302.1 1079.4,307.5" fill="rgb(221,28,28)" stroke="rgb(221,28,28)" stroke-width="0.6"/><polygon points="903.6,290.2 899.6,295.0 879.8,307.0 884.6,301.2" fill="rgb(71,9,9)" stroke="rgb(71,9,9)" stroke-width="0.6"/><polygon points="1122.4,482.6 1129.1,474.6 1121.4,496.0 1114.9,503.8" fill="rgb(177,23,23)" stroke="rgb(177,23,23)" stroke-width="0.6"/><polygon points="922.2,572.0 935.3,575.4 941.6,580.7 931.4,578.2" fill="rgb(166,21,21)" stroke="rgb(166,21,21)" stroke-width="0.6"/><polygon points="1114.4,354.2 1113.7,346.7 1124.7,366.9 1125.4,375.0" fill="rgb(244,31,31)" stroke="rgb(244,31,31)" stroke-width="0.6"/><polygon points="1070.5,551.1 1081.6,546.0 1066.0,559.4 1056.2,563.9" fill="rgb(169,22,22)" stroke="rgb(169,22,22)" stroke-width="0.6"/><polygon points="992.4,581.0 1006.1,580.3 996.2,584.5 985.7,585.1" fill="rgb(171,22,22)" stroke="rgb(171,22,22)" stroke-width="0.6"/><polygon points="993.8,274.1 990.0,273.8 986.7,270.2 994.4,270.7" fill="rgb(124,16,16)" stroke="rgb(124,16,16)" stroke-width="0.6"/><polygon points="997.7,274.6 993.8,274.1 994.4,270.7 1001.9,271.7" fill="rgb(131,17,17)" stroke="rgb(131,17,17)" stroke-width="0.6"/><polygon points="1082.2,313.0 1079.4,307.5 1096.1,322.0 1099.4,328.6" fill="rgb(237,30,30)" stroke="rgb(237,30,30)" stroke-width="0.6"/><polygon points="990.0,273.8 986.2,273.8 979.3,270.1 986.7,270.2" fill="rgb(117,15,15)" stroke="rgb(117,15,15)" stroke-width="0.6"/><polygon points="1001.4,275.3 997.7,274.6 1001.9,271.7 1009.3,273.1" fill="rgb(138,17,17)" stroke="rgb(138,17,17)" stroke-width="0.6"/><polygon points="833.8,367.7 834.6,376.4 826.7,398.5 825.9,389.5" fill="rgb(176,22,22)" stroke="rgb(176,22,22)" stroke-width="0.6"/><polygon points="954.2,274.2 949.9,276.1 929.2,279.2 935.5,276.3" fill="rgb(64,8,8)" stroke="rgb(64,8,8)" stroke-width="0.6"/><polygon points="986.2,273.8 982.6,274.0 972.1,270.5 979.3,270.1" fill="rgb(111,14,14)" stroke="rgb(111,14,14)" stroke-width="0.6"/><polygon points="1036.5,284.7 1032.8,281.9 1051.0,287.6 1056.4,291.7" fill="rgb(194,25,25)" stroke="rgb(194,25,25)" stroke-width="0.6"/><polygon points="1004.9,276.2 1001.4,275.3 1009.3,273.1 1016.2,274.8" fill="rgb(145,18,18)" stroke="rgb(145,18,18)" stroke-width="0.6"/><polygon points="935.3,575.4 949.3,578.0 952.3,582.8 941.6,580.7" fill="rgb(167,21,21)" stroke="rgb(167,21,21)" stroke-width="0.6"/><polygon points="978.2,580.8 992.4,581.0 985.7,585.1 974.7,585.0" fill="rgb(168,21,21)" stroke="rgb(168,21,21)" stroke-width="0.6"/><polygon points="1130.0,405.5 1132.8,397.2 1136.5,420.1 1133.5,428.7" fill="rgb(221,28,28)" stroke="rgb(221,28,28)" stroke-width="0.6"/><polygon points="982.6,274.0 979.2,274.4 965.4,271.3 972.1,270.5" fill="rgb(106,13,13)" stroke="rgb(106,13,13)" stroke-width="0.6"/><polygon points="1008.1,277.2 1004.9,276.2 1016.2,274.8 1022.5,276.9" fill="rgb(151,19,19)" stroke="rgb(151,19,19)" stroke-width="0.6"/><polygon points="949.3,578.0 963.7,579.8 963.5,584.2 952.3,582.8" fill="rgb(168,21,21)" stroke="rgb(168,21,21)" stroke-width="0.6"/><polygon points="963.7,579.8 978.2,580.8 974.7,585.0 963.5,584.2" fill="rgb(168,21,21)" stroke="rgb(168,21,21)" stroke-width="0.6"/><polygon points="879.8,307.0 877.7,313.2 860.0,329.1 862.4,322.0" fill="rgb(95,12,12)" stroke="rgb(95,12,12)" stroke-width="0.6"/><polygon points="887.1,552.1 899.9,557.6 910.1,568.1 899.5,563.5" fill="rgb(186,24,24)" stroke="rgb(186,24,24)" stroke-width="0.6"/><polygon points="822.6,421.4 827.3,430.7 827.0,453.5 822.4,444.4" fill="rgb(202,26,26)" stroke="rgb(202,26,26)" stroke-width="0.6"/><polygon points="830.5,475.8 838.5,484.6 845.1,505.1 837.5,496.8" fill="rgb(197,25,25)" stroke="rgb(197,25,25)" stroke-width="0.6"/><polygon points="1030.6,570.4 1044.3,567.6 1030.2,576.4 1018.8,578.8" fill="rgb(178,23,23)" stroke="rgb(178,23,23)" stroke-width="0.6"/><polygon points="1100.0,335.1 1099.4,328.6 1113.7,346.7 1114.4,354.2" fill="rgb(243,31,31)" stroke="rgb(243,31,31)" stroke-width="0.6"/><polygon points="979.2,274.4 976.1,275.0 959.4,272.5 965.4,271.3" fill="rgb(101,13,13)" stroke="rgb(101,13,13)" stroke-width="0.6"/><polygon points="1010.9,278.4 1008.1,277.2 1022.5,276.9 1028.1,279.3" fill="rgb(158,20,20)" stroke="rgb(158,20,20)" stroke-width="0.6"/><polygon points="924.5,282.5 921.4,286.2 899.6,295.0 903.6,290.2" fill="rgb(59,7,7)" stroke="rgb(59,7,7)" stroke-width="0.6"/><polygon points="1126.4,460.1 1133.2,451.9 1129.1,474.6 1122.4,482.6" fill="rgb(192,25,25)" stroke="rgb(192,25,25)" stroke-width="0.6"/><polygon points="1105.0,510.8 1114.9,503.8 1104.0,523.1 1094.7,529.6" fill="rgb(160,20,20)" stroke="rgb(160,20,20)" stroke-width="0.6"/><polygon points="949.9,276.1 946.7,278.4 924.5,282.5 929.2,279.2" fill="rgb(60,7,7)" stroke="rgb(60,7,7)" stroke-width="0.6"/><polygon points="845.2,347.4 846.0,355.6 834.6,376.4 833.8,367.7" fill="rgb(148,19,19)" stroke="rgb(148,19,19)" stroke-width="0.6"/><polygon points="1062.4,300.1 1060.3,295.9 1079.4,307.5 1082.2,313.0" fill="rgb(223,29,29)" stroke="rgb(223,29,29)" stroke-width="0.6"/><polygon points="1039.1,287.5 1036.5,284.7 1056.4,291.7 1060.3,295.9" fill="rgb(199,25,25)" stroke="rgb(199,25,25)" stroke-width="0.6"/><polygon points="976.1,275.0 973.5,275.8 954.2,274.2 959.4,272.5" fill="rgb(96,12,12)" stroke="rgb(96,12,12)" stroke-width="0.6"/><polygon points="1122.7,382.8 1125.4,375.0 1132.8,397.2 1130.0,405.5" fill="rgb(235,30,30)" stroke="rgb(235,30,30)" stroke-width="0.6"/><polygon points="1013.3,279.8 1010.9,278.4 1028.1,279.3 1032.8,281.9" fill="rgb(163,21,21)" stroke="rgb(163,21,21)" stroke-width="0.6"/><polygon points="864.6,530.9 876.9,537.7 887.1,552.1 876.3,546.2" fill="rgb(194,25,25)" stroke="rgb(194,25,25)" stroke-width="0.6"/><polygon points="845.1,505.1 855.7,513.0 864.6,530.9 854.9,523.7" fill="rgb(190,24,24)" stroke="rgb(190,24,24)" stroke-width="0.6"/><polygon points="899.6,295.0 897.9,300.1 877.7,313.2 879.8,307.0" fill="rgb(71,9,9)" stroke="rgb(71,9,9)" stroke-width="0.6"/><polygon points="1056.8,555.4 1070.5,551.1 1056.2,563.9 1044.3,567.6" fill="rgb(173,22,22)" stroke="rgb(173,22,22)" stroke-width="0.6"/><polygon points="1082.4,535.3 1094.7,529.6 1081.6,546.0 1070.5,551.1" fill="rgb(169,22,22)" stroke="rgb(169,22,22)" stroke-width="0.6"/><polygon points="899.9,557.6 914.3,562.4 922.2,572.0 910.1,568.1" fill="rgb(174,22,22)" stroke="rgb(174,22,22)" stroke-width="0.6"/><polygon points="1082.7,318.3 1082.2,313.0 1099.4,328.6 1100.0,335.1" fill="rgb(234,30,30)" stroke="rgb(234,30,30)" stroke-width="0.6"/><polygon points="826.7,398.5 831.4,407.7 827.3,430.7 822.6,421.4" fill="rgb(196,25,25)" stroke="rgb(196,25,25)" stroke-width="0.6"/><polygon points="1015.3,572.3 1030.6,570.4 1018.8,578.8 1006.1,580.3" fill="rgb(179,23,23)" stroke="rgb(179,23,23)" stroke-width="0.6"/><polygon points="973.5,275.8 971.3,276.8 949.9,276.1 954.2,274.2" fill="rgb(94,12,12)" stroke="rgb(94,12,12)" stroke-width="0.6"/><polygon points="1015.2,281.2 1013.3,279.8 1032.8,281.9 1036.5,284.7" fill="rgb(168,21,21)" stroke="rgb(168,21,21)" stroke-width="0.6"/><polygon points="860.0,329.1 860.7,336.5 846.0,355.6 845.2,347.4" fill="rgb(117,15,15)" stroke="rgb(117,15,15)" stroke-width="0.6"/><polygon points="946.7,278.4 944.6,280.9 921.4,286.2 924.5,282.5" fill="rgb(58,7,7)" stroke="rgb(58,7,7)" stroke-width="0.6"/><polygon points="1126.8,436.8 1133.5,428.7 1133.2,451.9 1126.4,460.1" fill="rgb(205,26,26)" stroke="rgb(205,26,26)" stroke-width="0.6"/><polygon points="827.0,453.5 835.4,462.7 838.5,484.6 830.5,475.8" fill="rgb(197,25,25)" stroke="rgb(197,25,25)" stroke-width="0.6"/><polygon points="1040.6,290.4 1039.1,287.5 1060.3,295.9 1062.4,300.1" fill="rgb(200,26,26)" stroke="rgb(200,26,26)" stroke-width="0.6"/><polygon points="1112.0,361.2 1114.4,354.2 1125.4,375.0 1122.7,382.8" fill="rgb(238,31,31)" stroke="rgb(238,31,31)" stroke-width="0.6"/><polygon points="1112.1,489.9 1122.4,482.6 1114.9,503.8 1105.0,510.8" fill="rgb(171,22,22)" stroke="rgb(171,22,22)" stroke-width="0.6"/><polygon points="921.4,286.2 920.0,290.2 897.9,300.1 899.6,295.0" fill="rgb(47,6,6)" stroke="rgb(47,6,6)" stroke-width="0.6"/><polygon points="971.3,276.8 969.7,278.0 946.7,278.4 949.9,276.1" fill="rgb(92,12,12)" stroke="rgb(92,12,12)" stroke-width="0.6"/><polygon points="1016.5,282.6 1015.2,281.2 1036.5,284.7 1039.1,287.5" fill="rgb(171,22,22)" stroke="rgb(171,22,22)" stroke-width="0.6"/><polygon points="914.3,562.4 930.2,566.4 935.3,575.4 922.2,572.0" fill="rgb(167,21,21)" stroke="rgb(167,21,21)" stroke-width="0.6"/><polygon points="1062.8,304.3 1062.4,300.1 1082.2,313.0 1082.7,318.3" fill="rgb(221,28,28)" stroke="rgb(221,28,28)" stroke-width="0.6"/><polygon points="998.9,573.1 1015.3,572.3 1006.1,580.3 992.4,581.0" fill="rgb(175,22,22)" stroke="rgb(175,22,22)" stroke-width="0.6"/><polygon points="877.7,313.2 878.3,319.7 860.7,336.5 860.0,329.1" fill="rgb(91,11,11)" stroke="rgb(91,11,11)" stroke-width="0.6"/><polygon points="834.6,376.4 839.1,385.3 831.4,407.7 826.7,398.5" fill="rgb(179,23,23)" stroke="rgb(179,23,23)" stroke-width="0.6"/><polygon points="992.9,281.3 992.9,281.3 990.0,273.8 993.8,274.1" fill="rgb(129,16,16)" stroke="rgb(129,16,16)" stroke-width="0.6"/><polygon points="992.9,281.3 992.9,281.3 993.8,274.1 997.7,274.6" fill="rgb(131,17,17)" stroke="rgb(131,17,17)" stroke-width="0.6"/><polygon points="992.9,281.3 992.9,281.3 986.2,273.8 990.0,273.8" fill="rgb(127,16,16)" stroke="rgb(127,16,16)" stroke-width="0.6"/><polygon points="992.9,281.3 992.9,281.3 997.7,274.6 1001.4,275.3" fill="rgb(132,17,17)" stroke="rgb(132,17,17)" stroke-width="0.6"/><polygon points="876.9,537.7 891.5,543.9 899.9,557.6 887.1,552.1" fill="rgb(194,25,25)" stroke="rgb(194,25,25)" stroke-width="0.6"/><polygon points="992.9,281.3 992.9,281.3 982.6,274.0 986.2,273.8" fill="rgb(126,16,16)" stroke="rgb(126,16,16)" stroke-width="0.6"/><polygon points="992.9,281.3 992.9,281.3 1001.4,275.3 1004.9,276.2" fill="rgb(134,17,17)" stroke="rgb(134,17,17)" stroke-width="0.6"/><polygon points="1097.9,341.3 1100.0,335.1 1114.4,354.2 1112.0,361.2" fill="rgb(235,30,30)" stroke="rgb(235,30,30)" stroke-width="0.6"/><polygon points="992.9,281.3 992.9,281.3 979.2,274.4 982.6,274.0" fill="rgb(124,16,16)" stroke="rgb(124,16,16)" stroke-width="0.6"/><polygon points="992.9,281.3 992.9,281.3 1004.9,276.2 1008.1,277.2" fill="rgb(136,17,17)" stroke="rgb(136,17,17)" stroke-width="0.6"/><polygon points="969.7,278.0 968.6,279.3 944.6,280.9 946.7,278.4" fill="rgb(91,11,11)" stroke="rgb(91,11,11)" stroke-width="0.6"/><polygon points="838.5,484.6 849.9,493.1 855.7,513.0 845.1,505.1" fill="rgb(204,26,26)" stroke="rgb(204,26,26)" stroke-width="0.6"/><polygon points="1041.1,558.6 1056.8,555.4 1044.3,567.6 1030.6,570.4" fill="rgb(181,23,23)" stroke="rgb(181,23,23)" stroke-width="0.6"/><polygon points="1123.5,413.3 1130.0,405.5 1133.5,428.7 1126.8,436.8" fill="rgb(213,27,27)" stroke="rgb(213,27,27)" stroke-width="0.6"/><polygon points="1017.2,284.1 1016.5,282.6 1039.1,287.5 1040.6,290.4" fill="rgb(172,22,22)" stroke="rgb(172,22,22)" stroke-width="0.6"/><polygon points="944.6,280.9 943.7,283.6 920.0,290.2 921.4,286.2" fill="rgb(54,7,7)" stroke="rgb(54,7,7)" stroke-width="0.6"/><polygon points="930.2,566.4 947.0,569.5 949.3,578.0 935.3,575.4" fill="rgb(168,21,21)" stroke="rgb(168,21,21)" stroke-width="0.6"/><polygon points="992.9,281.3 992.9,281.3 976.1,275.0 979.2,274.4" fill="rgb(123,16,16)" stroke="rgb(123,16,16)" stroke-width="0.6"/><polygon points="992.9,281.3 992.9,281.3 1008.1,277.2 1010.9,278.4" fill="rgb(137,17,17)" stroke="rgb(137,17,17)" stroke-width="0.6"/><polygon points="981.7,573.0 998.9,573.1 992.4,581.0 978.2,580.8" fill="rgb(173,22,22)" stroke="rgb(173,22,22)" stroke-width="0.6"/><polygon points="1040.8,293.2 1040.6,290.4 1062.4,300.1 1062.8,304.3" fill="rgb(199,25,25)" stroke="rgb(199,25,25)" stroke-width="0.6"/><polygon points="1091.8,516.9 1105.0,510.8 1094.7,529.6 1082.4,535.3" fill="rgb(164,21,21)" stroke="rgb(164,21,21)" stroke-width="0.6"/><polygon points="992.9,281.3 992.9,281.3 973.5,275.8 976.1,275.0" fill="rgb(122,15,15)" stroke="rgb(122,15,15)" stroke-width="0.6"/><polygon points="992.9,281.3 992.9,281.3 1010.9,278.4 1013.3,279.8" fill="rgb(138,18,18)" stroke="rgb(138,18,18)" stroke-width="0.6"/><polygon points="855.7,513.0 869.3,520.5 876.9,537.7 864.6,530.9" fill="rgb(195,25,25)" stroke="rgb(195,25,25)" stroke-width="0.6"/><polygon points="827.3,430.7 835.8,439.9 835.4,462.7 827.0,453.5" fill="rgb(196,25,25)" stroke="rgb(196,25,25)" stroke-width="0.6"/><polygon points="897.9,300.1 898.4,305.5 878.3,319.7 877.7,313.2" fill="rgb(63,8,8)" stroke="rgb(63,8,8)" stroke-width="0.6"/><polygon points="947.0,569.5 964.3,571.7 963.7,579.8 949.3,578.0" fill="rgb(171,22,22)" stroke="rgb(171,22,22)" stroke-width="0.6"/><polygon points="964.3,571.7 981.7,573.0 978.2,580.8 963.7,579.8" fill="rgb(173,22,22)" stroke="rgb(173,22,22)" stroke-width="0.6"/><polygon points="992.9,281.3 992.9,281.3 971.3,276.8 973.5,275.8" fill="rgb(121,15,15)" stroke="rgb(121,15,15)" stroke-width="0.6"/><polygon points="992.9,281.3 992.9,281.3 1013.3,279.8 1015.2,281.2" fill="rgb(139,18,18)" stroke="rgb(139,18,18)" stroke-width="0.6"/><polygon points="1067.4,540.0 1082.4,535.3 1070.5,551.1 1056.8,555.4" fill="rgb(177,23,23)" stroke="rgb(177,23,23)" stroke-width="0.6"/><polygon points="1080.9,323.5 1082.7,318.3 1100.0,335.1 1097.9,341.3" fill="rgb(227,29,29)" stroke="rgb(227,29,29)" stroke-width="0.6"/><polygon points="846.0,355.6 850.2,363.9 839.1,385.3 834.6,376.4" fill="rgb(149,19,19)" stroke="rgb(149,19,19)" stroke-width="0.6"/><polygon points="1116.0,467.5 1126.4,460.1 1122.4,482.6 1112.1,489.9" fill="rgb(180,23,23)" stroke="rgb(180,23,23)" stroke-width="0.6"/><polygon points="992.9,281.3 992.9,281.3 969.7,278.0 971.3,276.8" fill="rgb(120,15,15)" stroke="rgb(120,15,15)" stroke-width="0.6"/><polygon points="968.6,279.3 968.2,280.6 943.7,283.6 944.6,280.9" fill="rgb(89,11,11)" stroke="rgb(89,11,11)" stroke-width="0.6"/><polygon points="992.9,281.3 992.9,281.3 1015.2,281.2 1016.5,282.6" fill="rgb(140,18,18)" stroke="rgb(140,18,18)" stroke-width="0.6"/><polygon points="1017.4,285.5 1017.2,284.1 1040.6,290.4 1040.8,293.2" fill="rgb(172,22,22)" stroke="rgb(172,22,22)" stroke-width="0.6"/><polygon points="920.0,290.2 920.4,294.4 898.4,305.5 897.9,300.1" fill="rgb(36,4,4)" stroke="rgb(36,4,4)" stroke-width="0.6"/><polygon points="992.9,281.3 992.9,281.3 968.6,279.3 969.7,278.0" fill="rgb(119,15,15)" stroke="rgb(119,15,15)" stroke-width="0.6"/><polygon points="992.9,281.3 992.9,281.3 1016.5,282.6 1017.2,284.1" fill="rgb(140,18,18)" stroke="rgb(140,18,18)" stroke-width="0.6"/><polygon points="1116.7,390.1 1122.7,382.8 1130.0,405.5 1123.5,413.3" fill="rgb(223,29,29)" stroke="rgb(223,29,29)" stroke-width="0.6"/><polygon points="1061.4,308.2 1062.8,304.3 1082.7,318.3 1080.9,323.5" fill="rgb(215,28,28)" stroke="rgb(215,28,28)" stroke-width="0.6"/><polygon points="992.9,281.3 992.9,281.3 968.2,280.6 968.6,279.3" fill="rgb(118,15,15)" stroke="rgb(118,15,15)" stroke-width="0.6"/><polygon points="992.9,281.3 992.9,281.3 1017.2,284.1 1017.4,285.5" fill="rgb(140,18,18)" stroke="rgb(140,18,18)" stroke-width="0.6"/><polygon points="891.5,543.9 908.1,549.4 914.3,562.4 899.9,557.6" fill="rgb(185,24,24)" stroke="rgb(185,24,24)" stroke-width="0.6"/><polygon points="943.7,283.6 943.9,286.5 920.4,294.4 920.0,290.2" fill="rgb(50,6,6)" stroke="rgb(50,6,6)" stroke-width="0.6"/><polygon points="1039.9,295.9 1040.8,293.2 1062.8,304.3 1061.4,308.2" fill="rgb(195,25,25)" stroke="rgb(195,25,25)" stroke-width="0.6"/><polygon points="1023.6,560.7 1041.1,558.6 1030.6,570.4 1015.3,572.3" fill="rgb(186,24,24)" stroke="rgb(186,24,24)" stroke-width="0.6"/><polygon points="992.9,281.3 992.9,281.3 968.3,282.1 968.2,280.6" fill="rgb(118,15,15)" stroke="rgb(118,15,15)" stroke-width="0.6"/><polygon points="860.7,336.5 864.5,344.0 850.2,363.9 846.0,355.6" fill="rgb(115,15,15)" stroke="rgb(115,15,15)" stroke-width="0.6"/><polygon points="968.2,280.6 968.3,282.1 943.9,286.5 943.7,283.6" fill="rgb(88,11,11)" stroke="rgb(88,11,11)" stroke-width="0.6"/><polygon points="992.9,281.3 992.9,281.3 1017.4,285.5 1016.9,286.9" fill="rgb(140,18,18)" stroke="rgb(140,18,18)" stroke-width="0.6"/><polygon points="1016.9,286.9 1017.4,285.5 1040.8,293.2 1039.9,295.9" fill="rgb(171,22,22)" stroke="rgb(171,22,22)" stroke-width="0.6"/><polygon points="831.4,407.7 839.7,416.9 835.8,439.9 827.3,430.7" fill="rgb(190,24,24)" stroke="rgb(190,24,24)" stroke-width="0.6"/><polygon points="992.9,281.3 992.9,281.3 969.0,283.5 968.3,282.1" fill="rgb(118,15,15)" stroke="rgb(118,15,15)" stroke-width="0.6"/><polygon points="835.4,462.7 847.2,471.5 849.9,493.1 838.5,484.6" fill="rgb(196,25,25)" stroke="rgb(196,25,25)" stroke-width="0.6"/><polygon points="992.9,281.3 992.9,281.3 1016.9,286.9 1015.8,288.1" fill="rgb(139,18,18)" stroke="rgb(139,18,18)" stroke-width="0.6"/><polygon points="1106.5,367.9 1112.0,361.2 1122.7,382.8 1116.7,390.1" fill="rgb(226,29,29)" stroke="rgb(226,29,29)" stroke-width="0.6"/><polygon points="992.9,281.3 992.9,281.3 970.4,285.0 969.0,283.5" fill="rgb(118,15,15)" stroke="rgb(118,15,15)" stroke-width="0.6"/><polygon points="1116.5,444.1 1126.8,436.8 1126.4,460.1 1116.0,467.5" fill="rgb(192,25,25)" stroke="rgb(192,25,25)" stroke-width="0.6"/><polygon points="992.9,281.3 992.9,281.3 1015.8,288.1 1014.2,289.3" fill="rgb(138,18,18)" stroke="rgb(138,18,18)" stroke-width="0.6"/><polygon points="1098.5,496.2 1112.1,489.9 1105.0,510.8 1091.8,516.9" fill="rgb(171,22,22)" stroke="rgb(171,22,22)" stroke-width="0.6"/><polygon points="878.3,319.7 881.6,326.3 864.5,344.0 860.7,336.5" fill="rgb(72,9,9)" stroke="rgb(72,9,9)" stroke-width="0.6"/><polygon points="992.9,281.3 992.9,281.3 972.2,286.4 970.4,285.0" fill="rgb(118,15,15)" stroke="rgb(118,15,15)" stroke-width="0.6"/><polygon points="992.9,281.3 992.9,281.3 1014.2,289.3 1012.0,290.3" fill="rgb(137,17,17)" stroke="rgb(137,17,17)" stroke-width="0.6"/><polygon points="968.3,282.1 969.0,283.5 945.4,289.4 943.9,286.5" fill="rgb(88,11,11)" stroke="rgb(88,11,11)" stroke-width="0.6"/><polygon points="869.3,520.5 885.4,527.4 891.5,543.9 876.9,537.7" fill="rgb(194,25,25)" stroke="rgb(194,25,25)" stroke-width="0.6"/><polygon points="1015.8,288.1 1016.9,286.9 1039.9,295.9 1037.8,298.5" fill="rgb(168,21,21)" stroke="rgb(168,21,21)" stroke-width="0.6"/><polygon points="1093.1,347.1 1097.9,341.3 1112.0,361.2 1106.5,367.9" fill="rgb(224,29,29)" stroke="rgb(224,29,29)" stroke-width="0.6"/><polygon points="992.9,281.3 992.9,281.3 974.6,287.7 972.2,286.4" fill="rgb(119,15,15)" stroke="rgb(119,15,15)" stroke-width="0.6"/><polygon points="992.9,281.3 992.9,281.3 1012.0,290.3 1009.4,291.1" fill="rgb(135,17,17)" stroke="rgb(135,17,17)" stroke-width="0.6"/><polygon points="849.9,493.1 864.3,501.1 869.3,520.5 855.7,513.0" fill="rgb(204,26,26)" stroke="rgb(204,26,26)" stroke-width="0.6"/><polygon points="908.1,549.4 926.2,554.0 930.2,566.4 914.3,562.4" fill="rgb(177,23,23)" stroke="rgb(177,23,23)" stroke-width="0.6"/><polygon points="898.4,305.5 901.1,311.0 881.6,326.3 878.3,319.7" fill="rgb(55,7,7)" stroke="rgb(55,7,7)" stroke-width="0.6"/><polygon points="1050.1,543.6 1067.4,540.0 1056.8,555.4 1041.1,558.6" fill="rgb(190,24,24)" stroke="rgb(190,24,24)" stroke-width="0.6"/><polygon points="943.9,286.5 945.4,289.4 922.6,298.6 920.4,294.4" fill="rgb(50,6,6)" stroke="rgb(50,6,6)" stroke-width="0.6"/><polygon points="1004.8,561.7 1023.6,560.7 1015.3,572.3 998.9,573.1" fill="rgb(189,24,24)" stroke="rgb(189,24,24)" stroke-width="0.6"/><polygon points="992.9,281.3 992.9,281.3 977.4,288.9 974.6,287.7" fill="rgb(120,15,15)" stroke="rgb(120,15,15)" stroke-width="0.6"/><polygon points="992.9,281.3 992.9,281.3 1009.4,291.1 1006.4,291.7" fill="rgb(134,17,17)" stroke="rgb(134,17,17)" stroke-width="0.6"/><polygon points="920.4,294.4 922.6,298.6 901.1,311.0 898.4,305.5" fill="rgb(36,4,4)" stroke="rgb(36,4,4)" stroke-width="0.6"/><polygon points="1037.8,298.5 1039.9,295.9 1061.4,308.2 1058.3,311.9" fill="rgb(189,24,24)" stroke="rgb(189,24,24)" stroke-width="0.6"/><polygon points="1076.9,328.3 1080.9,323.5 1097.9,341.3 1093.1,347.1" fill="rgb(218,28,28)" stroke="rgb(218,28,28)" stroke-width="0.6"/><polygon points="1075.8,521.9 1091.8,516.9 1082.4,535.3 1067.4,540.0" fill="rgb(178,23,23)" stroke="rgb(178,23,23)" stroke-width="0.6"/><polygon points="839.1,385.3 847.1,394.1 839.7,416.9 831.4,407.7" fill="rgb(172,22,22)" stroke="rgb(172,22,22)" stroke-width="0.6"/><polygon points="992.9,281.3 992.9,281.3 980.6,290.0 977.4,288.9" fill="rgb(121,15,15)" stroke="rgb(121,15,15)" stroke-width="0.6"/><polygon points="992.9,281.3 992.9,281.3 1006.4,291.7 1003.0,292.2" fill="rgb(132,17,17)" stroke="rgb(132,17,17)" stroke-width="0.6"/><polygon points="1058.3,311.9 1061.4,308.2 1080.9,323.5 1076.9,328.3" fill="rgb(207,26,26)" stroke="rgb(207,26,26)" stroke-width="0.6"/><polygon points="992.9,281.3 992.9,281.3 984.1,290.8 980.6,290.0" fill="rgb(122,15,15)" stroke="rgb(122,15,15)" stroke-width="0.6"/><polygon points="992.9,281.3 992.9,281.3 1003.0,292.2 999.3,292.3" fill="rgb(130,16,16)" stroke="rgb(130,16,16)" stroke-width="0.6"/><polygon points="992.9,281.3 992.9,281.3 987.9,291.5 984.1,290.8" fill="rgb(123,16,16)" stroke="rgb(123,16,16)" stroke-width="0.6"/><polygon points="992.9,281.3 992.9,281.3 999.3,292.3 995.6,292.3" fill="rgb(128,16,16)" stroke="rgb(128,16,16)" stroke-width="0.6"/><polygon points="969.0,283.5 970.4,285.0 948.0,292.2 945.4,289.4" fill="rgb(89,11,11)" stroke="rgb(89,11,11)" stroke-width="0.6"/><polygon points="992.9,281.3 992.9,281.3 991.7,292.0 987.9,291.5" fill="rgb(125,16,16)" stroke="rgb(125,16,16)" stroke-width="0.6"/><polygon points="992.9,281.3 992.9,281.3 995.6,292.3 991.7,292.0" fill="rgb(126,16,16)" stroke="rgb(126,16,16)" stroke-width="0.6"/><polygon points="1113.6,420.3 1123.5,413.3 1126.8,436.8 1116.5,444.1" fill="rgb(205,26,26)" stroke="rgb(205,26,26)" stroke-width="0.6"/><polygon points="1014.2,289.3 1015.8,288.1 1037.8,298.5 1034.6,300.7" fill="rgb(164,21,21)" stroke="rgb(164,21,21)" stroke-width="0.6"/><polygon points="926.2,554.0 945.4,557.6 947.0,569.5 930.2,566.4" fill="rgb(179,23,23)" stroke="rgb(179,23,23)" stroke-width="0.6"/><polygon points="835.8,439.9 847.8,448.8 847.2,471.5 835.4,462.7" fill="rgb(190,24,24)" stroke="rgb(190,24,24)" stroke-width="0.6"/><polygon points="985.2,561.5 1004.8,561.7 998.9,573.1 981.7,573.0" fill="rgb(193,25,25)" stroke="rgb(193,25,25)" stroke-width="0.6"/><polygon points="850.2,363.9 857.7,372.1 847.1,394.1 839.1,385.3" fill="rgb(150,19,19)" stroke="rgb(150,19,19)" stroke-width="0.6"/><polygon points="1102.2,473.9 1116.0,467.5 1112.1,489.9 1098.5,496.2" fill="rgb(174,22,22)" stroke="rgb(174,22,22)" stroke-width="0.6"/><polygon points="970.4,285.0 972.2,286.4 951.7,295.0 948.0,292.2" fill="rgb(91,11,11)" stroke="rgb(91,11,11)" stroke-width="0.6"/><polygon points="945.4,557.6 965.3,560.1 964.3,571.7 947.0,569.5" fill="rgb(186,24,24)" stroke="rgb(186,24,24)" stroke-width="0.6"/><polygon points="965.3,560.1 985.2,561.5 981.7,573.0 964.3,571.7" fill="rgb(193,25,25)" stroke="rgb(193,25,25)" stroke-width="0.6"/><polygon points="1012.0,290.3 1014.2,289.3 1034.6,300.7 1030.3,302.7" fill="rgb(160,20,20)" stroke="rgb(160,20,20)" stroke-width="0.6"/><polygon points="945.4,289.4 948.0,292.2 926.4,302.8 922.6,298.6" fill="rgb(54,7,7)" stroke="rgb(54,7,7)" stroke-width="0.6"/><polygon points="1107.4,396.7 1116.7,390.1 1123.5,413.3 1113.6,420.3" fill="rgb(212,27,27)" stroke="rgb(212,27,27)" stroke-width="0.6"/><polygon points="1034.6,300.7 1037.8,298.5 1058.3,311.9 1053.6,315.3" fill="rgb(182,23,23)" stroke="rgb(182,23,23)" stroke-width="0.6"/><polygon points="885.4,527.4 903.6,533.4 908.1,549.4 891.5,543.9" fill="rgb(185,24,24)" stroke="rgb(185,24,24)" stroke-width="0.6"/><polygon points="864.5,344.0 871.3,351.5 857.7,372.1 850.2,363.9" fill="rgb(115,14,14)" stroke="rgb(115,14,14)" stroke-width="0.6"/><polygon points="1030.8,545.9 1050.1,543.6 1041.1,558.6 1023.6,560.7" fill="rgb(197,25,25)" stroke="rgb(197,25,25)" stroke-width="0.6"/><polygon points="922.6,298.6 926.4,302.8 906.1,316.4 901.1,311.0" fill="rgb(45,5,5)" stroke="rgb(45,5,5)" stroke-width="0.6"/><polygon points="972.2,286.4 974.6,287.7 956.4,297.6 951.7,295.0" fill="rgb(92,12,12)" stroke="rgb(92,12,12)" stroke-width="0.6"/><polygon points="847.2,471.5 862.2,479.8 864.3,501.1 849.9,493.1" fill="rgb(193,25,25)" stroke="rgb(193,25,25)" stroke-width="0.6"/><polygon points="1009.4,291.1 1012.0,290.3 1030.3,302.7 1025.1,304.3" fill="rgb(154,20,20)" stroke="rgb(154,20,20)" stroke-width="0.6"/><polygon points="1098.0,373.8 1106.5,367.9 1116.7,390.1 1107.4,396.7" fill="rgb(217,28,28)" stroke="rgb(217,28,28)" stroke-width="0.6"/><polygon points="1053.6,315.3 1058.3,311.9 1076.9,328.3 1070.8,332.6" fill="rgb(197,25,25)" stroke="rgb(197,25,25)" stroke-width="0.6"/><polygon points="881.6,326.3 887.6,332.8 871.3,351.5 864.5,344.0" fill="rgb(75,9,9)" stroke="rgb(75,9,9)" stroke-width="0.6"/><polygon points="901.1,311.0 906.1,316.4 887.6,332.8 881.6,326.3" fill="rgb(62,8,8)" stroke="rgb(62,8,8)" stroke-width="0.6"/><polygon points="839.7,416.9 851.6,425.7 847.8,448.8 835.8,439.9" fill="rgb(186,24,24)" stroke="rgb(186,24,24)" stroke-width="0.6"/><polygon points="1081.8,501.4 1098.5,496.2 1091.8,516.9 1075.8,521.9" fill="rgb(188,24,24)" stroke="rgb(188,24,24)" stroke-width="0.6"/><polygon points="864.3,501.1 881.5,508.4 885.4,527.4 869.3,520.5" fill="rgb(198,25,25)" stroke="rgb(198,25,25)" stroke-width="0.6"/><polygon points="1085.7,352.3 1093.1,347.1 1106.5,367.9 1098.0,373.8" fill="rgb(216,28,28)" stroke="rgb(216,28,28)" stroke-width="0.6"/><polygon points="1070.8,332.6 1076.9,328.3 1093.1,347.1 1085.7,352.3" fill="rgb(209,27,27)" stroke="rgb(209,27,27)" stroke-width="0.6"/><polygon points="974.6,287.7 977.4,288.9 962.0,299.9 956.4,297.6" fill="rgb(93,12,12)" stroke="rgb(93,12,12)" stroke-width="0.6"/><polygon points="1057.3,525.7 1075.8,521.9 1067.4,540.0 1050.1,543.6" fill="rgb(195,25,25)" stroke="rgb(195,25,25)" stroke-width="0.6"/><polygon points="948.0,292.2 951.7,295.0 931.8,306.8 926.4,302.8" fill="rgb(62,8,8)" stroke="rgb(62,8,8)" stroke-width="0.6"/><polygon points="1102.8,450.4 1116.5,444.1 1116.0,467.5 1102.2,473.9" fill="rgb(185,24,24)" stroke="rgb(185,24,24)" stroke-width="0.6"/><polygon points="1006.4,291.7 1009.4,291.1 1025.1,304.3 1019.1,305.6" fill="rgb(147,19,19)" stroke="rgb(147,19,19)" stroke-width="0.6"/><polygon points="1030.3,302.7 1034.6,300.7 1053.6,315.3 1047.3,318.2" fill="rgb(173,22,22)" stroke="rgb(173,22,22)" stroke-width="0.6"/><polygon points="977.4,288.9 980.6,290.0 968.3,302.0 962.0,299.9" fill="rgb(93,12,12)" stroke="rgb(93,12,12)" stroke-width="0.6"/><polygon points="903.6,533.4 923.6,538.5 926.2,554.0 908.1,549.4" fill="rgb(189,24,24)" stroke="rgb(189,24,24)" stroke-width="0.6"/><polygon points="1003.0,292.2 1006.4,291.7 1019.1,305.6 1012.4,306.4" fill="rgb(139,18,18)" stroke="rgb(139,18,18)" stroke-width="0.6"/><polygon points="1010.2,547.0 1030.8,545.9 1023.6,560.7 1004.8,561.7" fill="rgb(201,26,26)" stroke="rgb(201,26,26)" stroke-width="0.6"/><polygon points="847.1,394.1 858.5,402.6 851.6,425.7 839.7,416.9" fill="rgb(162,21,21)" stroke="rgb(162,21,21)" stroke-width="0.6"/><polygon points="980.6,290.0 984.1,290.8 975.2,303.8 968.3,302.0" fill="rgb(97,12,12)" stroke="rgb(97,12,12)" stroke-width="0.6"/><polygon points="999.3,292.3 1003.0,292.2 1012.4,306.4 1005.3,306.7" fill="rgb(131,17,17)" stroke="rgb(131,17,17)" stroke-width="0.6"/><polygon points="926.4,302.8 931.8,306.8 913.1,321.7 906.1,316.4" fill="rgb(63,8,8)" stroke="rgb(63,8,8)" stroke-width="0.6"/><polygon points="1100.5,426.4 1113.6,420.3 1116.5,444.1 1102.8,450.4" fill="rgb(193,25,25)" stroke="rgb(193,25,25)" stroke-width="0.6"/><polygon points="984.1,290.8 987.9,291.5 982.6,305.2 975.2,303.8" fill="rgb(102,13,13)" stroke="rgb(102,13,13)" stroke-width="0.6"/><polygon points="951.7,295.0 956.4,297.6 938.7,310.6 931.8,306.8" fill="rgb(68,8,8)" stroke="rgb(68,8,8)" stroke-width="0.6"/><polygon points="995.6,292.3 999.3,292.3 1005.3,306.7 997.8,306.7" fill="rgb(123,16,16)" stroke="rgb(123,16,16)" stroke-width="0.6"/><polygon points="847.8,448.8 863.0,457.3 862.2,479.8 847.2,471.5" fill="rgb(184,23,23)" stroke="rgb(184,23,23)" stroke-width="0.6"/><polygon points="1047.3,318.2 1053.6,315.3 1070.8,332.6 1062.7,336.4" fill="rgb(188,24,24)" stroke="rgb(188,24,24)" stroke-width="0.6"/><polygon points="1025.1,304.3 1030.3,302.7 1047.3,318.2 1039.7,320.6" fill="rgb(163,21,21)" stroke="rgb(163,21,21)" stroke-width="0.6"/><polygon points="987.9,291.5 991.7,292.0 990.1,306.1 982.6,305.2" fill="rgb(109,14,14)" stroke="rgb(109,14,14)" stroke-width="0.6"/><polygon points="991.7,292.0 995.6,292.3 997.8,306.7 990.1,306.1" fill="rgb(116,15,15)" stroke="rgb(116,15,15)" stroke-width="0.6"/><polygon points="923.6,538.5 944.7,542.4 945.4,557.6 926.2,554.0" fill="rgb(197,25,25)" stroke="rgb(197,25,25)" stroke-width="0.6"/><polygon points="1085.3,479.1 1102.2,473.9 1098.5,496.2 1081.8,501.4" fill="rgb(189,24,24)" stroke="rgb(189,24,24)" stroke-width="0.6"/><polygon points="988.6,546.7 1010.2,547.0 1004.8,561.7 985.2,561.5" fill="rgb(209,27,27)" stroke="rgb(209,27,27)" stroke-width="0.6"/><polygon points="857.7,372.1 868.4,380.1 858.5,402.6 847.1,394.1" fill="rgb(141,18,18)" stroke="rgb(141,18,18)" stroke-width="0.6"/><polygon points="906.1,316.4 913.1,321.7 896.1,339.1 887.6,332.8" fill="rgb(76,9,9)" stroke="rgb(76,9,9)" stroke-width="0.6"/><polygon points="881.5,508.4 901.0,514.8 903.6,533.4 885.4,527.4" fill="rgb(190,24,24)" stroke="rgb(190,24,24)" stroke-width="0.6"/><polygon points="1095.1,402.4 1107.4,396.7 1113.6,420.3 1100.5,426.4" fill="rgb(202,26,26)" stroke="rgb(202,26,26)" stroke-width="0.6"/><polygon points="1036.8,528.2 1057.3,525.7 1050.1,543.6 1030.8,545.9" fill="rgb(205,26,26)" stroke="rgb(205,26,26)" stroke-width="0.6"/><polygon points="862.2,479.8 880.1,487.4 881.5,508.4 864.3,501.1" fill="rgb(193,25,25)" stroke="rgb(193,25,25)" stroke-width="0.6"/><polygon points="1062.7,336.4 1070.8,332.6 1085.7,352.3 1076.0,356.8" fill="rgb(202,26,26)" stroke="rgb(202,26,26)" stroke-width="0.6"/><polygon points="944.7,542.4 966.6,545.2 965.3,560.1 945.4,557.6" fill="rgb(205,26,26)" stroke="rgb(205,26,26)" stroke-width="0.6"/><polygon points="871.3,351.5 881.0,358.7 868.4,380.1 857.7,372.1" fill="rgb(113,14,14)" stroke="rgb(113,14,14)" stroke-width="0.6"/><polygon points="966.6,545.2 988.6,546.7 985.2,561.5 965.3,560.1" fill="rgb(210,27,27)" stroke="rgb(210,27,27)" stroke-width="0.6"/><polygon points="887.6,332.8 896.1,339.1 881.0,358.7 871.3,351.5" fill="rgb(88,11,11)" stroke="rgb(88,11,11)" stroke-width="0.6"/><polygon points="956.4,297.6 962.0,299.9 946.9,314.1 938.7,310.6" fill="rgb(72,9,9)" stroke="rgb(72,9,9)" stroke-width="0.6"/><polygon points="1062.6,505.4 1081.8,501.4 1075.8,521.9 1057.3,525.7" fill="rgb(205,26,26)" stroke="rgb(205,26,26)" stroke-width="0.6"/><polygon points="1019.1,305.6 1025.1,304.3 1039.7,320.6 1030.9,322.4" fill="rgb(154,20,20)" stroke="rgb(154,20,20)" stroke-width="0.6"/><polygon points="1086.8,379.0 1098.0,373.8 1107.4,396.7 1095.1,402.4" fill="rgb(212,27,27)" stroke="rgb(212,27,27)" stroke-width="0.6"/><polygon points="1076.0,356.8 1085.7,352.3 1098.0,373.8 1086.8,379.0" fill="rgb(208,27,27)" stroke="rgb(208,27,27)" stroke-width="0.6"/><polygon points="931.8,306.8 938.7,310.6 922.1,326.6 913.1,321.7" fill="rgb(75,9,9)" stroke="rgb(75,9,9)" stroke-width="0.6"/><polygon points="851.6,425.7 866.6,434.0 863.0,457.3 847.8,448.8" fill="rgb(179,23,23)" stroke="rgb(179,23,23)" stroke-width="0.6"/><polygon points="1039.7,320.6 1047.3,318.2 1062.7,336.4 1052.8,339.5" fill="rgb(179,23,23)" stroke="rgb(179,23,23)" stroke-width="0.6"/><polygon points="1086.2,455.6 1102.8,450.4 1102.2,473.9 1085.3,479.1" fill="rgb(188,24,24)" stroke="rgb(188,24,24)" stroke-width="0.6"/><polygon points="962.0,299.9 968.3,302.0 956.2,317.2 946.9,314.1" fill="rgb(78,10,10)" stroke="rgb(78,10,10)" stroke-width="0.6"/><polygon points="1012.4,306.4 1019.1,305.6 1030.9,322.4 1021.0,323.6" fill="rgb(146,19,19)" stroke="rgb(146,19,19)" stroke-width="0.6"/><polygon points="901.0,514.8 922.3,520.2 923.6,538.5 903.6,533.4" fill="rgb(199,25,25)" stroke="rgb(199,25,25)" stroke-width="0.6"/><polygon points="1014.7,529.3 1036.8,528.2 1030.8,545.9 1010.2,547.0" fill="rgb(211,27,27)" stroke="rgb(211,27,27)" stroke-width="0.6"/><polygon points="968.3,302.0 975.2,303.8 966.4,319.8 956.2,317.2" fill="rgb(87,11,11)" stroke="rgb(87,11,11)" stroke-width="0.6"/><polygon points="913.1,321.7 922.1,326.6 906.8,345.1 896.1,339.1" fill="rgb(85,11,11)" stroke="rgb(85,11,11)" stroke-width="0.6"/><polygon points="1005.3,306.7 1012.4,306.4 1021.0,323.6 1010.5,324.1" fill="rgb(139,18,18)" stroke="rgb(139,18,18)" stroke-width="0.6"/><polygon points="858.5,402.6 873.0,410.6 866.6,434.0 851.6,425.7" fill="rgb(157,20,20)" stroke="rgb(157,20,20)" stroke-width="0.6"/><polygon points="863.0,457.3 881.0,464.9 880.1,487.4 862.2,479.8" fill="rgb(182,23,23)" stroke="rgb(182,23,23)" stroke-width="0.6"/><polygon points="1052.8,339.5 1062.7,336.4 1076.0,356.8 1064.0,360.5" fill="rgb(192,25,25)" stroke="rgb(192,25,25)" stroke-width="0.6"/><polygon points="938.7,310.6 946.9,314.1 932.7,331.1 922.1,326.6" fill="rgb(83,10,10)" stroke="rgb(83,10,10)" stroke-width="0.6"/><polygon points="1084.4,431.4 1100.5,426.4 1102.8,450.4 1086.2,455.6" fill="rgb(190,24,24)" stroke="rgb(190,24,24)" stroke-width="0.6"/><polygon points="880.1,487.4 900.3,494.1 901.0,514.8 881.5,508.4" fill="rgb(197,25,25)" stroke="rgb(197,25,25)" stroke-width="0.6"/><polygon points="975.2,303.8 982.6,305.2 977.2,321.8 966.4,319.8" fill="rgb(99,12,12)" stroke="rgb(99,12,12)" stroke-width="0.6"/><polygon points="1065.9,483.1 1085.3,479.1 1081.8,501.4 1062.6,505.4" fill="rgb(211,27,27)" stroke="rgb(211,27,27)" stroke-width="0.6"/><polygon points="1030.9,322.4 1039.7,320.6 1052.8,339.5 1041.3,341.8" fill="rgb(168,21,21)" stroke="rgb(168,21,21)" stroke-width="0.6"/><polygon points="997.8,306.7 1005.3,306.7 1010.5,324.1 999.5,324.0" fill="rgb(130,16,16)" stroke="rgb(130,16,16)" stroke-width="0.6"/><polygon points="1041.3,508.0 1062.6,505.4 1057.3,525.7 1036.8,528.2" fill="rgb(220,28,28)" stroke="rgb(220,28,28)" stroke-width="0.6"/><polygon points="982.6,305.2 990.1,306.1 988.3,323.2 977.2,321.8" fill="rgb(111,14,14)" stroke="rgb(111,14,14)" stroke-width="0.6"/><polygon points="896.1,339.1 906.8,345.1 893.3,365.5 881.0,358.7" fill="rgb(97,12,12)" stroke="rgb(97,12,12)" stroke-width="0.6"/><polygon points="990.1,306.1 997.8,306.7 999.5,324.0 988.3,323.2" fill="rgb(121,15,15)" stroke="rgb(121,15,15)" stroke-width="0.6"/><polygon points="868.4,380.1 881.9,387.6 873.0,410.6 858.5,402.6" fill="rgb(138,17,17)" stroke="rgb(138,17,17)" stroke-width="0.6"/><polygon points="922.3,520.2 944.9,524.5 944.7,542.4 923.6,538.5" fill="rgb(214,27,27)" stroke="rgb(214,27,27)" stroke-width="0.6"/><polygon points="991.6,529.1 1014.7,529.3 1010.2,547.0 988.6,546.7" fill="rgb(222,28,28)" stroke="rgb(222,28,28)" stroke-width="0.6"/><polygon points="881.0,358.7 893.3,365.5 881.9,387.6 868.4,380.1" fill="rgb(119,15,15)" stroke="rgb(119,15,15)" stroke-width="0.6"/><polygon points="1064.0,360.5 1076.0,356.8 1086.8,379.0 1073.2,383.3" fill="rgb(193,25,25)" stroke="rgb(193,25,25)" stroke-width="0.6"/><polygon points="1080.1,407.1 1095.1,402.4 1100.5,426.4 1084.4,431.4" fill="rgb(193,25,25)" stroke="rgb(193,25,25)" stroke-width="0.6"/><polygon points="1073.2,383.3 1086.8,379.0 1095.1,402.4 1080.1,407.1" fill="rgb(193,25,25)" stroke="rgb(193,25,25)" stroke-width="0.6"/><polygon points="944.9,524.5 968.2,527.4 966.6,545.2 944.7,542.4" fill="rgb(221,28,28)" stroke="rgb(221,28,28)" stroke-width="0.6"/><polygon points="968.2,527.4 991.6,529.1 988.6,546.7 966.6,545.2" fill="rgb(226,29,29)" stroke="rgb(226,29,29)" stroke-width="0.6"/><polygon points="946.9,314.1 956.2,317.2 944.7,335.1 932.7,331.1" fill="rgb(93,12,12)" stroke="rgb(93,12,12)" stroke-width="0.6"/><polygon points="1021.0,323.6 1030.9,322.4 1041.3,341.8 1028.6,343.4" fill="rgb(159,20,20)" stroke="rgb(159,20,20)" stroke-width="0.6"/><polygon points="866.6,434.0 884.4,441.6 881.0,464.9 863.0,457.3" fill="rgb(176,22,22)" stroke="rgb(176,22,22)" stroke-width="0.6"/><polygon points="922.1,326.6 932.7,331.1 919.6,350.5 906.8,345.1" fill="rgb(103,13,13)" stroke="rgb(103,13,13)" stroke-width="0.6"/><polygon points="1067.0,459.6 1086.2,455.6 1085.3,479.1 1065.9,483.1" fill="rgb(204,26,26)" stroke="rgb(204,26,26)" stroke-width="0.6"/><polygon points="1041.3,341.8 1052.8,339.5 1064.0,360.5 1050.3,363.4" fill="rgb(179,23,23)" stroke="rgb(179,23,23)" stroke-width="0.6"/><polygon points="900.3,494.1 922.4,499.7 922.3,520.2 901.0,514.8" fill="rgb(210,27,27)" stroke="rgb(210,27,27)" stroke-width="0.6"/><polygon points="1018.4,509.1 1041.3,508.0 1036.8,528.2 1014.7,529.3" fill="rgb(230,29,29)" stroke="rgb(230,29,29)" stroke-width="0.6"/><polygon points="956.2,317.2 966.4,319.8 957.9,338.4 944.7,335.1" fill="rgb(106,13,13)" stroke="rgb(106,13,13)" stroke-width="0.6"/><polygon points="881.0,464.9 901.5,471.7 900.3,494.1 880.1,487.4" fill="rgb(198,25,25)" stroke="rgb(198,25,25)" stroke-width="0.6"/><polygon points="1010.5,324.1 1021.0,323.6 1028.6,343.4 1015.0,344.1" fill="rgb(151,19,19)" stroke="rgb(151,19,19)" stroke-width="0.6"/><polygon points="1044.3,485.8 1065.9,483.1 1062.6,505.4 1041.3,508.0" fill="rgb(228,29,29)" stroke="rgb(228,29,29)" stroke-width="0.6"/><polygon points="873.0,410.6 890.1,417.9 884.4,441.6 866.6,434.0" fill="rgb(170,22,22)" stroke="rgb(170,22,22)" stroke-width="0.6"/><polygon points="906.8,345.1 919.6,350.5 907.9,371.8 893.3,365.5" fill="rgb(129,16,16)" stroke="rgb(129,16,16)" stroke-width="0.6"/><polygon points="1065.9,435.2 1084.4,431.4 1086.2,455.6 1067.0,459.6" fill="rgb(203,26,26)" stroke="rgb(203,26,26)" stroke-width="0.6"/><polygon points="1050.3,363.4 1064.0,360.5 1073.2,383.3 1057.5,386.5" fill="rgb(181,23,23)" stroke="rgb(181,23,23)" stroke-width="0.6"/><polygon points="966.4,319.8 977.2,321.8 971.8,341.1 957.9,338.4" fill="rgb(120,15,15)" stroke="rgb(120,15,15)" stroke-width="0.6"/><polygon points="999.5,324.0 1010.5,324.1 1015.0,344.1 1000.7,343.9" fill="rgb(143,18,18)" stroke="rgb(143,18,18)" stroke-width="0.6"/><polygon points="881.9,387.6 898.0,394.4 890.1,417.9 873.0,410.6" fill="rgb(160,20,20)" stroke="rgb(160,20,20)" stroke-width="0.6"/><polygon points="893.3,365.5 907.9,371.8 898.0,394.4 881.9,387.6" fill="rgb(146,19,19)" stroke="rgb(146,19,19)" stroke-width="0.6"/><polygon points="932.7,331.1 944.7,335.1 934.1,355.3 919.6,350.5" fill="rgb(121,15,15)" stroke="rgb(121,15,15)" stroke-width="0.6"/><polygon points="922.4,499.7 945.8,504.1 944.9,524.5 922.3,520.2" fill="rgb(223,29,29)" stroke="rgb(223,29,29)" stroke-width="0.6"/><polygon points="977.2,321.8 988.3,323.2 986.2,342.9 971.8,341.1" fill="rgb(129,16,16)" stroke="rgb(129,16,16)" stroke-width="0.6"/><polygon points="1028.6,343.4 1041.3,341.8 1050.3,363.4 1035.0,365.2" fill="rgb(167,21,21)" stroke="rgb(167,21,21)" stroke-width="0.6"/><polygon points="988.3,323.2 999.5,324.0 1000.7,343.9 986.2,342.9" fill="rgb(136,17,17)" stroke="rgb(136,17,17)" stroke-width="0.6"/><polygon points="994.4,508.9 1018.4,509.1 1014.7,529.3 991.6,529.1" fill="rgb(234,30,30)" stroke="rgb(234,30,30)" stroke-width="0.6"/><polygon points="1062.7,410.6 1080.1,407.1 1084.4,431.4 1065.9,435.2" fill="rgb(198,25,25)" stroke="rgb(198,25,25)" stroke-width="0.6"/><polygon points="1057.5,386.5 1073.2,383.3 1080.1,407.1 1062.7,410.6" fill="rgb(188,24,24)" stroke="rgb(188,24,24)" stroke-width="0.6"/><polygon points="884.4,441.6 904.6,448.3 901.5,471.7 881.0,464.9" fill="rgb(192,25,25)" stroke="rgb(192,25,25)" stroke-width="0.6"/><polygon points="945.8,504.1 970.0,507.2 968.2,527.4 944.9,524.5" fill="rgb(233,30,30)" stroke="rgb(233,30,30)" stroke-width="0.6"/><polygon points="970.0,507.2 994.4,508.9 991.6,529.1 968.2,527.4" fill="rgb(238,31,31)" stroke="rgb(238,31,31)" stroke-width="0.6"/><polygon points="1045.6,462.1 1067.0,459.6 1065.9,483.1 1044.3,485.8" fill="rgb(224,29,29)" stroke="rgb(224,29,29)" stroke-width="0.6"/><polygon points="901.5,471.7 923.9,477.4 922.4,499.7 900.3,494.1" fill="rgb(218,28,28)" stroke="rgb(218,28,28)" stroke-width="0.6"/><polygon points="1021.1,487.0 1044.3,485.8 1041.3,508.0 1018.4,509.1" fill="rgb(240,31,31)" stroke="rgb(240,31,31)" stroke-width="0.6"/><polygon points="944.7,335.1 957.9,338.4 949.9,359.3 934.1,355.3" fill="rgb(134,17,17)" stroke="rgb(134,17,17)" stroke-width="0.6"/><polygon points="919.6,350.5 934.1,355.3 924.5,377.2 907.9,371.8" fill="rgb(149,19,19)" stroke="rgb(149,19,19)" stroke-width="0.6"/><polygon points="1015.0,344.1 1028.6,343.4 1035.0,365.2 1018.6,366.1" fill="rgb(162,21,21)" stroke="rgb(162,21,21)" stroke-width="0.6"/><polygon points="1035.0,365.2 1050.3,363.4 1057.5,386.5 1040.0,388.6" fill="rgb(176,22,22)" stroke="rgb(176,22,22)" stroke-width="0.6"/><polygon points="890.1,417.9 909.6,424.3 904.6,448.3 884.4,441.6" fill="rgb(188,24,24)" stroke="rgb(188,24,24)" stroke-width="0.6"/><polygon points="1045.4,437.7 1065.9,435.2 1067.0,459.6 1045.6,462.1" fill="rgb(218,28,28)" stroke="rgb(218,28,28)" stroke-width="0.6"/><polygon points="957.9,338.4 971.8,341.1 966.7,362.4 949.9,359.3" fill="rgb(144,18,18)" stroke="rgb(144,18,18)" stroke-width="0.6"/><polygon points="907.9,371.8 924.5,377.2 916.3,400.4 898.0,394.4" fill="rgb(166,21,21)" stroke="rgb(166,21,21)" stroke-width="0.6"/><polygon points="1000.7,343.9 1015.0,344.1 1018.6,366.1 1001.5,365.9" fill="rgb(157,20,20)" stroke="rgb(157,20,20)" stroke-width="0.6"/><polygon points="898.0,394.4 916.3,400.4 909.6,424.3 890.1,417.9" fill="rgb(178,23,23)" stroke="rgb(178,23,23)" stroke-width="0.6"/><polygon points="1040.0,388.6 1057.5,386.5 1062.7,410.6 1043.5,413.0" fill="rgb(196,25,25)" stroke="rgb(196,25,25)" stroke-width="0.6"/><polygon points="923.9,477.4 947.6,481.9 945.8,504.1 922.4,499.7" fill="rgb(228,29,29)" stroke="rgb(228,29,29)" stroke-width="0.6"/><polygon points="996.8,486.7 1021.1,487.0 1018.4,509.1 994.4,508.9" fill="rgb(239,31,31)" stroke="rgb(239,31,31)" stroke-width="0.6"/><polygon points="1043.5,413.0 1062.7,410.6 1065.9,435.2 1045.4,437.7" fill="rgb(210,27,27)" stroke="rgb(210,27,27)" stroke-width="0.6"/><polygon points="971.8,341.1 986.2,342.9 984.0,364.7 966.7,362.4" fill="rgb(153,20,20)" stroke="rgb(153,20,20)" stroke-width="0.6"/><polygon points="986.2,342.9 1000.7,343.9 1001.5,365.9 984.0,364.7" fill="rgb(157,20,20)" stroke="rgb(157,20,20)" stroke-width="0.6"/><polygon points="904.6,448.3 926.7,453.9 923.9,477.4 901.5,471.7" fill="rgb(213,27,27)" stroke="rgb(213,27,27)" stroke-width="0.6"/><polygon points="934.1,355.3 949.9,359.3 942.6,381.8 924.5,377.2" fill="rgb(158,20,20)" stroke="rgb(158,20,20)" stroke-width="0.6"/><polygon points="1022.7,463.3 1045.6,462.1 1044.3,485.8 1021.1,487.0" fill="rgb(237,30,30)" stroke="rgb(237,30,30)" stroke-width="0.6"/><polygon points="1018.6,366.1 1035.0,365.2 1040.0,388.6 1021.2,389.6" fill="rgb(179,23,23)" stroke="rgb(179,23,23)" stroke-width="0.6"/><polygon points="947.6,481.9 972.1,485.0 970.0,507.2 945.8,504.1" fill="rgb(238,30,30)" stroke="rgb(238,30,30)" stroke-width="0.6"/><polygon points="972.1,485.0 996.8,486.7 994.4,508.9 970.0,507.2" fill="rgb(243,31,31)" stroke="rgb(243,31,31)" stroke-width="0.6"/><polygon points="909.6,424.3 930.9,429.7 926.7,453.9 904.6,448.3" fill="rgb(207,26,26)" stroke="rgb(207,26,26)" stroke-width="0.6"/><polygon points="924.5,377.2 942.6,381.8 936.2,405.5 916.3,400.4" fill="rgb(180,23,23)" stroke="rgb(180,23,23)" stroke-width="0.6"/><polygon points="949.9,359.3 966.7,362.4 961.8,385.4 942.6,381.8" fill="rgb(171,22,22)" stroke="rgb(171,22,22)" stroke-width="0.6"/><polygon points="1023.3,438.8 1045.4,437.7 1045.6,462.1 1022.7,463.3" fill="rgb(228,29,29)" stroke="rgb(228,29,29)" stroke-width="0.6"/><polygon points="1001.5,365.9 1018.6,366.1 1021.2,389.6 1001.6,389.4" fill="rgb(179,23,23)" stroke="rgb(179,23,23)" stroke-width="0.6"/><polygon points="1021.2,389.6 1040.0,388.6 1043.5,413.0 1022.8,414.0" fill="rgb(202,26,26)" stroke="rgb(202,26,26)" stroke-width="0.6"/><polygon points="926.7,453.9 950.2,458.3 947.6,481.9 923.9,477.4" fill="rgb(229,29,29)" stroke="rgb(229,29,29)" stroke-width="0.6"/><polygon points="916.3,400.4 936.2,405.5 930.9,429.7 909.6,424.3" fill="rgb(198,25,25)" stroke="rgb(198,25,25)" stroke-width="0.6"/><polygon points="998.8,463.1 1022.7,463.3 1021.1,487.0 996.8,486.7" fill="rgb(239,31,31)" stroke="rgb(239,31,31)" stroke-width="0.6"/><polygon points="1022.8,414.0 1043.5,413.0 1045.4,437.7 1023.3,438.8" fill="rgb(217,28,28)" stroke="rgb(217,28,28)" stroke-width="0.6"/><polygon points="966.7,362.4 984.0,364.7 981.6,388.0 961.8,385.4" fill="rgb(180,23,23)" stroke="rgb(180,23,23)" stroke-width="0.6"/><polygon points="984.0,364.7 1001.5,365.9 1001.6,389.4 981.6,388.0" fill="rgb(183,23,23)" stroke="rgb(183,23,23)" stroke-width="0.6"/><polygon points="950.2,458.3 974.4,461.4 972.1,485.0 947.6,481.9" fill="rgb(239,31,31)" stroke="rgb(239,31,31)" stroke-width="0.6"/><polygon points="974.4,461.4 998.8,463.1 996.8,486.7 972.1,485.0" fill="rgb(243,31,31)" stroke="rgb(243,31,31)" stroke-width="0.6"/><polygon points="942.6,381.8 961.8,385.4 957.4,409.5 936.2,405.5" fill="rgb(194,25,25)" stroke="rgb(194,25,25)" stroke-width="0.6"/><polygon points="930.9,429.7 953.5,434.0 950.2,458.3 926.7,453.9" fill="rgb(223,29,29)" stroke="rgb(223,29,29)" stroke-width="0.6"/><polygon points="1001.6,389.4 1021.2,389.6 1022.8,414.0 1001.2,413.8" fill="rgb(205,26,26)" stroke="rgb(205,26,26)" stroke-width="0.6"/><polygon points="1000.3,438.6 1023.3,438.8 1022.7,463.3 998.8,463.1" fill="rgb(234,30,30)" stroke="rgb(234,30,30)" stroke-width="0.6"/><polygon points="936.2,405.5 957.4,409.5 953.5,434.0 930.9,429.7" fill="rgb(211,27,27)" stroke="rgb(211,27,27)" stroke-width="0.6"/><polygon points="1001.2,413.8 1022.8,414.0 1023.3,438.8 1000.3,438.6" fill="rgb(221,28,28)" stroke="rgb(221,28,28)" stroke-width="0.6"/><polygon points="961.8,385.4 981.6,388.0 979.2,412.3 957.4,409.5" fill="rgb(201,26,26)" stroke="rgb(201,26,26)" stroke-width="0.6"/><polygon points="981.6,388.0 1001.6,389.4 1001.2,413.8 979.2,412.3" fill="rgb(205,26,26)" stroke="rgb(205,26,26)" stroke-width="0.6"/><polygon points="953.5,434.0 976.8,436.9 974.4,461.4 950.2,458.3" fill="rgb(232,30,30)" stroke="rgb(232,30,30)" stroke-width="0.6"/><polygon points="976.8,436.9 1000.3,438.6 998.8,463.1 974.4,461.4" fill="rgb(237,30,30)" stroke="rgb(237,30,30)" stroke-width="0.6"/><polygon points="957.4,409.5 979.2,412.3 976.8,436.9 953.5,434.0" fill="rgb(218,28,28)" stroke="rgb(218,28,28)" stroke-width="0.6"/><polygon points="979.2,412.3 1001.2,413.8 1000.3,438.6 976.8,436.9" fill="rgb(221,28,28)" stroke="rgb(221,28,28)" stroke-width="0.6"/></g></svg>
<svg class="a" style="left:380px;top:720px" width="120" height="140">
<line x1="26" y1="100" x2="32" y2="34" stroke="#0000ff" stroke-width="3"/>
<polygon points="32,30 27,40 36,40" fill="#0000ff"/>
<line x1="26" y1="99" x2="84" y2="89" stroke="#00ff00" stroke-width="3"/>
<polygon points="88,89 80,85 81,93" fill="#00e000"/>
<ellipse cx="81" cy="89" rx="2" ry="4" fill="#3a0808"/>
<line x1="26" y1="100" x2="61" y2="122" stroke="#ff0000" stroke-width="3"/>
<circle cx="62" cy="122" r="3.5" fill="#ff0000"/>
<path d="M32.5 15.5 H47 V17.5 L36 26 H47 V28.3 H32.5 V26 L43.5 17.5 H32.5 Z" fill="none" stroke="#0000ff" stroke-width="1"/>
<path d="M90 76.5 H93.5 L98 82 L102.5 76.5 H106 L99.5 84 V90 H96.5 V84 Z" fill="none" stroke="#00ee00" stroke-width="1"/>
<path d="M67.5 115.5 H71 L75.5 120.3 L80 115.5 H83.5 L77.5 121.8 L84 128 H80.5 L75.5 123.2 L70.5 128 H67 L73.5 121.8 Z" fill="none" stroke="#ff0000" stroke-width="1"/>
</svg>
<div class="a" style="left:0;top:907px;width:1443px;height:8px;background:linear-gradient(90deg,#2a2826 0,#3a3a3e 100px,#2e2a26 160px,#5a6470 195px,#a4a4a4 210px,#9a9a9a 232px,#151515 240px,#101010 278px,#8a8a8a 286px,#999 400px,#8e8e90 600px,#9a9a9a 800px,#8a8a8c 1000px,#9c9c9c 1200px,#8a8a8a 1415px,#3a3a3a 1443px)"></div>
<div class="a" style="left:0;top:907px;width:1436px;height:1px;background:#2a2a2a"></div>
<div class="a" style="left:0;top:908px;width:1437px;height:1px;background:#d8d8d8"></div>
<div class="a" style="left:0;top:913px;width:1437px;height:1px;background:#e8e8e8"></div>
<div class="a" style="left:0;top:914px;width:1443px;height:1px;background:#101010"></div>
<div class="a" style="left:1435px;top:20px;width:8px;height:888px;background:linear-gradient(#8a8a6a 0,#8494a4 60px,#6e7e90 300px,#5a6674 600px,#4a4438 800px,#4a4036 888px)"></div>
<div class="a" style="left:1435px;top:29px;width:1px;height:879px;background:#3a3a3a"></div>
<div class="a" style="left:1436px;top:29px;width:1px;height:879px;background:rgba(255,255,255,.7)"></div>
<div class="a" style="left:1441px;top:20px;width:1px;height:888px;background:rgba(0,0,0,.35)"></div>
<div class="a" style="left:1442px;top:20px;width:1px;height:895px;background:#121212"></div>
<div class="a" style="left:0;top:29px;width:1px;height:879px;background:#17130f"></div>
<div class="a" style="left:1px;top:29px;width:1px;height:879px;background:#a0a0a0"></div>
</body></html>
